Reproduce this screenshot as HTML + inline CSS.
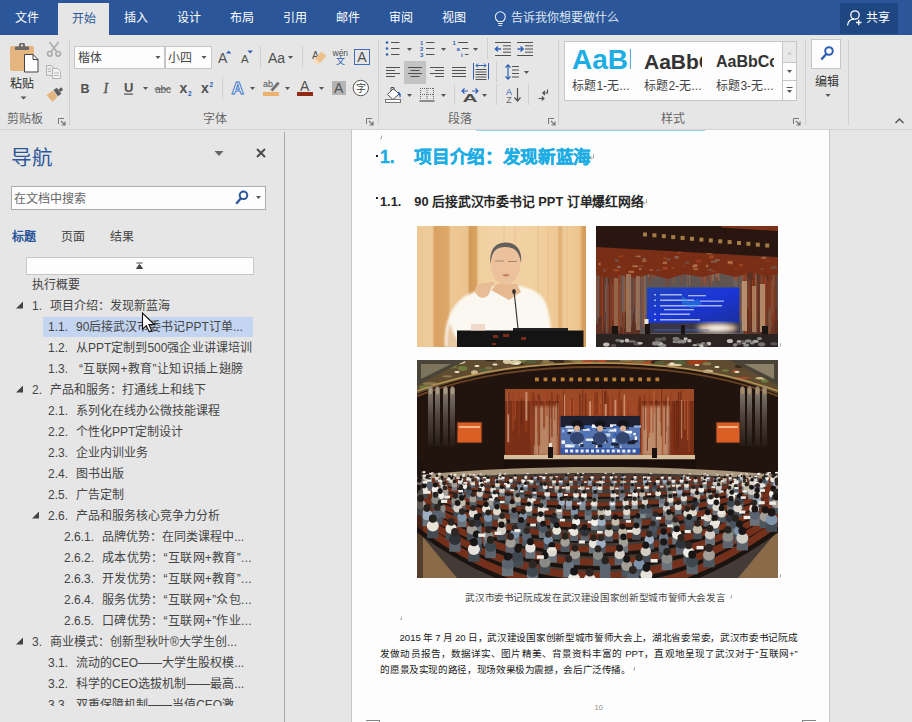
<!DOCTYPE html>
<html lang="zh-CN">
<head>
<meta charset="utf-8">
<title>Word</title>
<style>
html,body{margin:0;padding:0;}
body{width:912px;height:722px;overflow:hidden;position:relative;background:#e6e6e6;font-family:"Liberation Sans",sans-serif;font-size:12px;color:#444;}
div,span,svg{position:absolute;white-space:nowrap;box-sizing:border-box;}
#tabbar{left:0;top:0;width:912px;height:35px;background:#2b579a;}
#tabbar .t{top:0;height:35px;line-height:37px;color:#fff;font-size:12px;width:53px;text-align:justify;text-align-last:justify;}
#tabbar .act{left:58px;top:3px;width:51px;height:32px;line-height:31px;background:#e6e6e6;color:#2b579a;}
#share{left:840px;top:3px;width:58px;height:31px;background:#1e4680;}
#ribbon{left:0;top:35px;width:912px;height:95px;background:#e6e6e6;border-bottom:1px solid #d2d2d2;}
.glabel{color:#666;font-size:12px;height:14px;line-height:14px;width:24px;text-align:justify;text-align-last:justify;}
#nav{left:0;top:0;width:285px;height:722px;}
#navline{left:284px;top:132px;width:1px;height:590px;background:#ababab;}
#page{left:351px;top:130px;width:479px;height:592px;background:#fdfdfd;border-left:1px solid #c6c6c6;border-right:1px solid #c6c6c6;}
.h1{height:25px;line-height:25px;font-size:17.600px;font-weight:bold;color:#1cade4;-webkit-text-stroke:0.350px #1cade4;}
.jst{text-align:justify;text-align-last:justify;letter-spacing:-0.400px;}
.h2.jst{letter-spacing:-0.200px;}
.jst i{font-style:normal;letter-spacing:0;position:static;}
.h2{height:20px;line-height:20px;font-size:12.800px;font-weight:bold;color:#262626;}
.cap{height:16px;line-height:16px;font-size:9.600px;color:#4a4a4a;}
.bd{height:16px;line-height:16px;font-size:9.600px;color:#1a1a1a;}
</style>
</head>
<body>
<div id="tabbar">
  <div class="t" style="left:14.5px;width:24px">文件</div>
  <div class="t act"></div><div class="t" style="left:71.500px;top:1px;width:24px;color:#2b579a">开始</div>
  <div class="t" style="left:123.5px;width:24px">插入</div>
  <div class="t" style="left:176.5px;width:24px">设计</div>
  <div class="t" style="left:229.5px;width:24px">布局</div>
  <div class="t" style="left:282.5px;width:24px">引用</div>
  <div class="t" style="left:335.5px;width:24px">邮件</div>
  <div class="t" style="left:388.5px;width:24px">审阅</div>
  <div class="t" style="left:441.5px;width:24px">视图</div>
  <div class="t" style="left:511px;width:108px;color:#dfe6f2">告诉我你想要做什么</div>
  <div id="share"></div>
</div>
<div id="ribbon"></div>
<!-- ribbon text -->
<div style="left:10px;top:76.500px;width:24px;height:14px;line-height:14px;color:#2b2b2b;font-size:12px;text-align:justify;text-align-last:justify">粘贴</div>
<div class="glabel" style="left:7px;top:112px;width:36px">剪贴板</div>
<div class="glabel" style="left:203px;top:112px">字体</div>
<div class="glabel" style="left:448px;top:112px">段落</div>
<div class="glabel" style="left:661px;top:112px">样式</div>
<div style="left:74px;top:46px;width:91px;height:23px;background:#fdfdfd;border:1px solid #c6c6c6"></div>
<div style="left:165px;top:46px;width:47px;height:23px;background:#fdfdfd;border:1px solid #c6c6c6"></div>
<div style="left:78px;top:51px;height:15px;line-height:15px;color:#444;font-size:12px;width:24px;text-align:justify;text-align-last:justify">楷体</div>
<div style="left:168px;top:51px;height:15px;line-height:15px;color:#444;font-size:12px;width:24px;text-align:justify;text-align-last:justify">小四</div>
<div style="left:564px;top:41px;width:233px;height:60px;background:#fdfdfd;border:1px solid #c6c6c6"></div>
<div style="left:782px;top:42px;width:14px;height:58px;background:#e9e9e9;border-left:1px solid #c6c6c6"></div>
<div style="left:783px;top:62px;width:13px;height:19px;background:#fdfdfd;border-top:1px solid #c6c6c6;border-bottom:1px solid #c6c6c6"></div>
<div style="left:783px;top:81px;width:13px;height:19px;background:#fdfdfd"></div>
<div style="left:572px;top:44.500px;height:30px;line-height:30px;font-size:28px;font-weight:bold;color:#1cade4;width:58.500px;overflow:hidden">AaBl</div>
<div style="left:644px;top:48.500px;height:26px;line-height:26px;font-size:21px;font-weight:bold;color:#333;width:58px;overflow:hidden">AaBbC</div>
<div style="left:716px;top:50px;height:24px;line-height:24px;font-size:16px;font-weight:bold;color:#333;width:58px;overflow:hidden">AaBbCc</div>
<div style="left:572px;top:79px;height:15px;line-height:15px;font-size:12px;color:#444;width:57.500px;text-align:justify;text-align-last:justify">标题1-无...</div>
<div style="left:644px;top:79px;height:15px;line-height:15px;font-size:12px;color:#444;width:57.500px;text-align:justify;text-align-last:justify">标题2-无...</div>
<div style="left:716px;top:79px;height:15px;line-height:15px;font-size:12px;color:#444;width:57.500px;text-align:justify;text-align-last:justify">标题3-无...</div>
<div style="left:811px;top:39px;width:30px;height:30px;background:#fdfdfd;border:1px solid #c6c6c6"></div>
<div style="left:815px;top:74.500px;height:15px;line-height:15px;font-size:12px;color:#333;width:24px;text-align:justify;text-align-last:justify">编辑</div>
<svg id="ricons" style="left:0;top:0" width="912" height="130" viewBox="0 0 912 130">
<g id="clipboard">
  <rect x="10" y="46" width="24" height="25" rx="2" fill="#e4b57e"/>
  <path d="M15 50v-2.5a1 1 0 0 1 1-1h3v-2a1.5 1.5 0 0 1 1.5-1.5h3a1.5 1.5 0 0 1 1.5 1.5v2h3a1 1 0 0 1 1 1V50z M21 44.5v2h2v-2z" fill="#6a6a6a" fill-rule="evenodd"/>
  <path d="M24.5 54.5h8.5l5 5v12.5h-13.5z" fill="#fdfdfd" stroke="#444" stroke-width="1"/>
  <path d="M33 54.5v5h5" fill="none" stroke="#444" stroke-width="1"/>
  <path d="M20.5 96.5h6l-3 3z" fill="#555"/>
  <!-- scissors (disabled) -->
  <g stroke="#adadad" fill="none" stroke-width="1.700">
    <path d="M49.500 42l7.500 10M58.500 42l-7.500 10"/>
    <circle cx="49.800" cy="53.800" r="2.300"/><circle cx="58.200" cy="53.800" r="2.300"/>
  </g>
  <!-- copy (disabled) -->
  <g stroke="#b3b3b3" fill="#e9e9e9" stroke-width="1">
    <path d="M46.5 65.5h5l2.5 2.5v7.5h-7.5z"/>
    <path d="M52.5 68.5h5l3 3v7h-8z" fill="#f2f2f2"/>
    <path d="M48 69h3M48 71.5h3M54 73h5M54 75.5h5" fill="none"/>
  </g>
  <!-- format painter -->
  <path d="M46.5 95l6.5-4.500 4.500 6-5 5.500z" fill="#e4b57e"/>
  <path d="M53.5 90l3.300-2.300 4.500 6-3.300 2.500z" fill="#5c5c5c"/>
  <path d="M58.5 89.500l2.800-2.200 1.800 2.400-2.800 2.200z" fill="#5c5c5c"/>
  <!-- launcher -->
  <path d="M58.5 124v-5.500h5.5" fill="none" stroke="#777" stroke-width="1"/>
  <path d="M61 121l3.500 3.500M65 121.500v3.500h-3.500" fill="none" stroke="#777" stroke-width="1.200"/>
</g>
<g id="seps" fill="#d0d0d0">
  <rect x="69" y="40" width="1" height="85"/>
  <rect x="378" y="40" width="1" height="85"/>
  <rect x="558" y="40" width="1" height="85"/>
  <rect x="805" y="40" width="1" height="85"/>
  <rect x="848" y="40" width="1" height="85"/>
  <rect x="260" y="46" width="1" height="22"/>
  <rect x="302" y="46" width="1" height="22"/>
  <rect x="222" y="77" width="1" height="22"/>
  <rect x="487" y="38" width="1" height="21"/>
  <rect x="496" y="61" width="1" height="21"/>
  <rect x="454" y="84" width="1" height="21"/>
  <rect x="496" y="84" width="1" height="21"/>
  <rect x="528" y="84" width="1" height="21"/>
</g>
<g id="fontgrp" font-family="Liberation Sans, sans-serif">
  <path d="M155.500 56h5l-2.500 3z M201.500 56h5l-2.500 3z" fill="#555"/>
  <text x="80.500" y="92.500" font-size="12.500" font-weight="bold" fill="#505050">B</text>
  <text x="103.500" y="93" font-size="14" font-style="italic" font-family="Liberation Serif, serif" fill="#505050" stroke="#505050" stroke-width="0.300">I</text>
  <text x="124" y="92" font-size="13" fill="#505050" font-weight="bold">U</text>
  <rect x="124" y="93.500" width="9" height="1.200" fill="#505050"/>
  <path d="M143 87h5l-2.500 3z" fill="#555"/>
  <text x="155" y="92.500" font-size="10" fill="#5a5a5a">abc</text>
  <rect x="154.500" y="88.500" width="16.500" height="1" fill="#5a5a5a"/>
  <text x="179.500" y="93" font-size="14" font-weight="bold" fill="#505050">x</text>
  <text x="188" y="96" font-size="6.500" font-weight="bold" fill="#2e5fb5">2</text>
  <text x="201" y="93" font-size="14" font-weight="bold" fill="#505050">x</text>
  <text x="209.500" y="87" font-size="6.500" font-weight="bold" fill="#2e5fb5">2</text>
  <!-- grow / shrink -->
  <text x="218" y="63" font-size="14" fill="#505050">A</text>
  <path d="M226 53.500l2.700-3 2.700 3z" fill="#2e5fb5"/>
  <text x="241" y="63" font-size="11.500" fill="#505050">A</text>
  <path d="M247.500 50.500h5.400l-2.700 3z" fill="#2e5fb5"/>
  <text x="268" y="63" font-size="14" fill="#505050">Aa</text>
  <path d="M288 56h5l-2.500 3z" fill="#555"/>
  <!-- clear formatting -->
  <text x="312" y="59" font-size="10.500" fill="#505050">A</text>
  <path d="M313 60.500l8.500-9 5 4.500-8.500 9z" fill="#ecc08c"/>
  <path d="M313 60.500l2-2.100 5 4.500-2 2.100z" fill="#f6dfc2"/>
  <!-- phonetic -->
  <text x="332.500" y="55.800" font-size="8.500" fill="#505050">wén</text>
  <!-- char border -->
  <rect x="354.500" y="49.500" width="15" height="15" fill="none" stroke="#3f6dbb" stroke-width="1"/>
  <text x="357.300" y="62" font-size="14" fill="#505050">A</text>
  <!-- text effects -->
  <text x="231.500" y="93.500" font-size="17" font-weight="bold" fill="#fdfdfd" stroke="#3f78c9" stroke-width="1">A</text>
  <path d="M250 87h5l-2.500 3z" fill="#555"/>
  <!-- highlight -->
  <text x="263" y="87" font-size="9" fill="#505050">ab</text>
  <path d="M270.500 89.800l7-8 2.200 1.800-7 8z" fill="#707070"/>
  <rect x="263" y="92" width="16" height="4" fill="#ebb26e"/>
  <path d="M285 87h5l-2.500 3z" fill="#555"/>
  <!-- font color -->
  <text x="300" y="91" font-size="14" fill="#505050">A</text>
  <rect x="297" y="92" width="16" height="4" fill="#8e2a12"/>
  <path d="M319 87h5l-2.500 3z" fill="#555"/>
  <!-- char shading -->
  <rect x="332" y="81" width="14" height="14" fill="#b4b4b4"/>
  <text x="334" y="93" font-size="14" fill="#505050">A</text>
  <!-- enclosed char -->
  <circle cx="360.800" cy="88" r="7.700" fill="#fdfdfd" stroke="#555" stroke-width="1"/>
  <path d="M366.500 124v-5.500h5.500" fill="none" stroke="#777" stroke-width="1"/>
  <path d="M369 121l3.500 3.500M373 121.500v3.500h-3.500" fill="none" stroke="#777" stroke-width="1.200"/>
</g>
<g id="paragrp" font-family="Liberation Sans, sans-serif">
  <!-- bullets -->
  <g fill="#2e5fb5"><circle cx="387" cy="42.500" r="1.300"/><circle cx="387" cy="48.500" r="1.300"/><circle cx="387" cy="54.500" r="1.300"/></g>
  <path d="M391 42.500h8.500M391 48.500h8.500M391 54.500h8.500" stroke="#505050" stroke-width="1.200" fill="none"/>
  <path d="M407 48h5l-2.500 3z" fill="#555"/>
  <!-- numbering -->
  <g font-size="6" font-weight="bold" fill="#2e5fb5"><text x="420" y="45">1</text><text x="420" y="51">2</text><text x="420" y="57">3</text></g>
  <path d="M426 42.500h8.500M426 48.500h8.500M426 54.500h8.500" stroke="#505050" stroke-width="1.200" fill="none"/>
  <path d="M441 48h5l-2.500 3z" fill="#555"/>
  <!-- multilevel -->
  <g font-size="6" font-weight="bold" fill="#2e5fb5"><text x="452.500" y="45">1</text><text x="456.500" y="51">a</text><text x="461" y="57">i</text></g>
  <path d="M458 42.500h10M462 48.500h6.500M465 54.500h3.500" stroke="#505050" stroke-width="1.200" fill="none"/>
  <path d="M473 48h5l-2.500 3z" fill="#555"/>
  <!-- decrease indent -->
  <path d="M495 42.500h16M503 45.800h8M503 49h8M503 52.200h8M495 55.500h16" stroke="#505050" stroke-width="1" fill="none"/>
  <path d="M501 49h-5.500M498 46.500l-2.700 2.500 2.700 2.500" stroke="#2e5fb5" stroke-width="1.300" fill="none"/>
  <!-- increase indent -->
  <path d="M517 42.500h16M525 45.800h8M525 49h8M525 52.200h8M517 55.500h16" stroke="#505050" stroke-width="1" fill="none"/>
  <path d="M517.500 49h5.500M520.500 46.500l2.700 2.500-2.700 2.500" stroke="#2e5fb5" stroke-width="1.300" fill="none"/>
  <!-- align left -->
  <path d="M386 67.500h14M386 70.500h9M386 73.500h14M386 76.500h9" stroke="#505050" stroke-width="1" fill="none"/>
  <!-- center (active) -->
  <rect x="404" y="61" width="22" height="23" fill="#c3c3c3"/>
  <path d="M408 67.500h14M410.500 70.500h9M408 73.500h14M410.500 76.500h9" stroke="#505050" stroke-width="1" fill="none"/>
  <!-- right -->
  <path d="M430 67.500h14M435 70.500h9M430 73.500h14M435 76.500h9" stroke="#505050" stroke-width="1" fill="none"/>
  <!-- justify -->
  <path d="M452 67.500h14M452 70.500h14M452 73.500h14M452 76.500h14" stroke="#505050" stroke-width="1" fill="none"/>
  <!-- distribute -->
  <path d="M473.500 63v16.500M488.500 63v16.500" stroke="#2e5fb5" stroke-width="1" fill="none"/>
  <path d="M476 65.500h10M478 63.500l-2 2 2 2M484 63.500l2 2-2 2" stroke="#2e5fb5" stroke-width="1" fill="none"/>
  <path d="M475.500 69.500h11M475.500 72h11M475.500 74.500h11M475.500 77h11M475.500 79.500h11" stroke="#505050" stroke-width="1" fill="none"/>
  <!-- line spacing -->
  <path d="M508 65v14M505.500 67.500l2.500-2.700 2.500 2.700M505.500 76.500l2.500 2.700 2.500-2.700" stroke="#2e5fb5" stroke-width="1.200" fill="none"/>
  <path d="M512 66.500h7M512 70h7M512 73.500h7M512 77h7" stroke="#505050" stroke-width="1" fill="none"/>
  <path d="M524 71h5l-2.500 3z" fill="#555"/>
  <!-- shading bucket -->
  <path d="M387.500 94.500l6-6 5.500 5.500-6 5.500z" fill="#fdfdfd" stroke="#505050" stroke-width="1"/>
  <path d="M391 91v-3.500h3v3" fill="none" stroke="#505050" stroke-width="1"/>
  <path d="M398.500 91.500c2.500 1.500 3 4.500 1.500 6.500c-0.500-2-1-3-2-4.500z" fill="#2e5fb5"/>
  <rect x="385.500" y="99.500" width="15" height="3" fill="#fdfdfd" stroke="#777" stroke-width="1"/>
  <path d="M407 94h5l-2.500 3z" fill="#555"/>
  <!-- borders -->
  <path d="M420 88.500h14M420 94.500h14M420.500 88v12M427 88v12M433.500 88v12" stroke="#666" stroke-width="1" stroke-dasharray="1 1" fill="none"/>
  <path d="M419.500 101h15" stroke="#505050" stroke-width="1.200" fill="none"/>
  <path d="M441 94h5l-2.500 3z" fill="#555"/>
  <!-- char scaling -->
  <path d="M462 91h6M472 91h6M464.500 88.500l-2.500 2.500 2.500 2.500M475.500 88.500l2.500 2.500-2.500 2.500" stroke="#2e5fb5" stroke-width="1.200" fill="none"/>
  <text x="0" y="0" font-size="11" font-weight="bold" fill="#505050" transform="translate(462.500 101.500) scale(1.900 1)">A</text>
  <path d="M482 94h5l-2.500 3z" fill="#555"/>
  <!-- sort -->
  <text x="506" y="94.500" font-size="9" fill="#2e5fb5">A</text>
  <text x="506.300" y="102.500" font-size="9" fill="#666">Z</text>
  <path d="M517.500 88v13M514.500 97.500l3 3.500 3-3.500" stroke="#505050" stroke-width="1.200" fill="none"/>
  <!-- show marks -->
  <path d="M547.500 89.500v3.500h-4.500M545 91l-2.200 2 2.200 2" stroke="#505050" stroke-width="1.100" fill="none"/>
  <path d="M538.500 98.500h5.500M541.800 96.500l2.200 2-2.200 2" stroke="#505050" stroke-width="1.100" fill="none"/>
  <path d="M548.500 124v-5.500h5.500" fill="none" stroke="#777" stroke-width="1"/>
  <path d="M551 121l3.500 3.500M555 121.500v3.500h-3.500" fill="none" stroke="#777" stroke-width="1.200"/>
</g>
<g id="stylegrp">
  <path d="M787 54.500l2.500-3 2.500 3z" fill="#c8c8c8"/>
  <path d="M787 70h5l-2.500 3z" fill="#555"/>
  <path d="M786.500 87.500h6" stroke="#555" stroke-width="1" fill="none"/>
  <path d="M787 90h5l-2.500 3z" fill="#555"/>
  <path d="M793.500 124v-5.500h5.500" fill="none" stroke="#777" stroke-width="1"/>
  <path d="M796 121l3.500 3.500M800 121.500v3.500h-3.500" fill="none" stroke="#777" stroke-width="1.200"/>
</g>
<g id="editgrp">
  <circle cx="829" cy="51" r="3.800" fill="none" stroke="#2e5fb5" stroke-width="2"/>
  <path d="M826.300 54l-5 5.500" stroke="#2e5fb5" stroke-width="2.400" fill="none"/>
  <path d="M825.500 94h5l-2.500 3z" fill="#555"/>
  <path d="M895.500 123l4-4 4 4" stroke="#555" stroke-width="1.500" fill="none"/>
</g>
<g id="tabicons">
  <!-- lightbulb -->
  <path d="M498 21.500c-2-1.500-2.700-3-2.700-4.700a5 5 0 0 1 10 0c0 1.700-0.700 3.200-2.700 4.700z" fill="none" stroke="#e8eef8" stroke-width="1.100"/>
  <path d="M498 23.500h4.600M498.500 25.500h3.600" stroke="#e8eef8" stroke-width="1" fill="none"/>
  <!-- share person -->
  <circle cx="855" cy="15" r="4.200" fill="none" stroke="#fff" stroke-width="1.300"/>
  <path d="M847.500 25.500c0.500-4 3-6.300 6.500-6.300" fill="none" stroke="#fff" stroke-width="1.300"/>
  <path d="M856 22.500h5.500M858.700 19.700v5.600" stroke="#fff" stroke-width="1.300" fill="none"/>
</g>
</svg>
<div style="left:336px;top:56px;font-size:9px;height:10px;line-height:10px;color:#2e5fb5">文</div>
<div style="left:355.800px;top:82.800px;font-size:10px;height:12px;line-height:12px;color:#444">字</div>
<div style="left:866px;top:3px;height:31px;line-height:31px;color:#fff;font-size:12px;width:24px;text-align:justify;text-align-last:justify">共享</div>
<div id="nav">
<div style="left:11px;top:144px;height:28px;line-height:28px;font-size:20.500px;color:#2b579a;width:41px;text-align:justify;text-align-last:justify">导航</div>
<div style="left:11px;top:186px;width:255px;height:24px;background:#fdfdfd;border:1px solid #ababab"></div>
<div style="left:14px;top:191px;height:16px;line-height:16px;font-size:12px;color:#666;width:72px;text-align:justify;text-align-last:justify">在文档中搜索</div>
<div style="left:12px;top:228.500px;height:16px;line-height:16px;font-size:12px;color:#2b579a;font-weight:bold;width:24px;text-align:justify;text-align-last:justify">标题</div>
<div style="left:61px;top:228.500px;height:16px;line-height:16px;font-size:12px;color:#444;width:24px;text-align:justify;text-align-last:justify">页面</div>
<div style="left:110px;top:228.500px;height:16px;line-height:16px;font-size:12px;color:#444;width:24px;text-align:justify;text-align-last:justify">结果</div>
<div style="left:26px;top:257px;width:228px;height:18px;background:#fdfdfd;border:1px solid #c6c6c6"></div>
<div style="left:43px;top:317px;width:210px;height:20px;background:#c3d5f1"></div>
<div id="navlist" style="left:0;top:275px;width:284px;height:431px;overflow:hidden;font-size:12px;color:#444">
<div style="left:32px;top:0px;width:48.2px;height:21px;line-height:21px;text-align:justify;text-align-last:justify">执行概要</div>
<div style="left:32px;top:21px;height:21px;line-height:21px">1.</div>
<div style="left:50px;top:21px;width:120.2px;height:21px;line-height:21px;text-align:justify;text-align-last:justify">项目介绍：发现新蓝海</div>
<div style="left:48px;top:42px;height:21px;line-height:21px">1.1.</div>
<div style="left:76px;top:42px;width:166.9px;height:21px;line-height:21px;text-align:justify;text-align-last:justify">90后接武汉市委书记PPT订单...</div>
<div style="left:48px;top:63px;height:21px;line-height:21px">1.2.</div>
<div style="left:76px;top:63px;width:175.6px;height:21px;line-height:21px;text-align:justify;text-align-last:justify">从PPT定制到500强企业讲课培训</div>
<div style="left:48px;top:84px;height:21px;line-height:21px">1.3.</div>
<div style="left:79px;top:84px;width:164.4px;height:21px;line-height:21px;text-align:justify;text-align-last:justify;letter-spacing:0.350px">“互联网+教育”让知识插上翅膀</div>
<div style="left:32px;top:105px;height:21px;line-height:21px">2.</div>
<div style="left:50px;top:105px;width:156.2px;height:21px;line-height:21px;text-align:justify;text-align-last:justify">产品和服务：打通线上和线下</div>
<div style="left:48px;top:126px;height:21px;line-height:21px">2.1.</div>
<div style="left:76px;top:126px;width:144.2px;height:21px;line-height:21px;text-align:justify;text-align-last:justify">系列化在线办公微技能课程</div>
<div style="left:48px;top:147px;height:21px;line-height:21px">2.2.</div>
<div style="left:76px;top:147px;width:107.5px;height:21px;line-height:21px;text-align:justify;text-align-last:justify">个性化PPT定制设计</div>
<div style="left:48px;top:168px;height:21px;line-height:21px">2.3.</div>
<div style="left:76px;top:168px;width:72.2px;height:21px;line-height:21px;text-align:justify;text-align-last:justify">企业内训业务</div>
<div style="left:48px;top:189px;height:21px;line-height:21px">2.4.</div>
<div style="left:76px;top:189px;width:48.2px;height:21px;line-height:21px;text-align:justify;text-align-last:justify">图书出版</div>
<div style="left:48px;top:210px;height:21px;line-height:21px">2.5.</div>
<div style="left:76px;top:210px;width:48.2px;height:21px;line-height:21px;text-align:justify;text-align-last:justify">广告定制</div>
<div style="left:48px;top:231px;height:21px;line-height:21px">2.6.</div>
<div style="left:76px;top:231px;width:144.2px;height:21px;line-height:21px;text-align:justify;text-align-last:justify">产品和服务核心竞争力分析</div>
<div style="left:64px;top:252px;height:21px;line-height:21px">2.6.1.</div>
<div style="left:102px;top:252px;width:142.2px;height:21px;line-height:21px;text-align:justify;text-align-last:justify">品牌优势：在同类课程中...</div>
<div style="left:64px;top:273px;height:21px;line-height:21px">2.6.2.</div>
<div style="left:102px;top:273px;width:150.0px;height:21px;line-height:21px;text-align:justify;text-align-last:justify;letter-spacing:0.300px">成本优势：“互联网+教育”...</div>
<div style="left:64px;top:294px;height:21px;line-height:21px">2.6.3.</div>
<div style="left:102px;top:294px;width:150.0px;height:21px;line-height:21px;text-align:justify;text-align-last:justify;letter-spacing:0.300px">开发优势：“互联网+教育”...</div>
<div style="left:64px;top:315px;height:21px;line-height:21px">2.6.4.</div>
<div style="left:102px;top:315px;width:150.0px;height:21px;line-height:21px;text-align:justify;text-align-last:justify;letter-spacing:0.300px">服务优势：“互联网+”众包...</div>
<div style="left:64px;top:336px;height:21px;line-height:21px">2.6.5.</div>
<div style="left:102px;top:336px;width:150.0px;height:21px;line-height:21px;text-align:justify;text-align-last:justify;letter-spacing:0.300px">口碑优势：“互联网+”作业...</div>
<div style="left:32px;top:357px;height:21px;line-height:21px">3.</div>
<div style="left:50px;top:357px;width:187.0px;height:21px;line-height:21px;text-align:justify;text-align-last:justify">商业模式：创新型秋叶®大学生创...</div>
<div style="left:48px;top:378px;height:21px;line-height:21px">3.1.</div>
<div style="left:76px;top:378px;width:168.2px;height:21px;line-height:21px;text-align:justify;text-align-last:justify">流动的CEO——大学生股权模...</div>
<div style="left:48px;top:399px;height:21px;line-height:21px">3.2.</div>
<div style="left:76px;top:399px;width:168.2px;height:21px;line-height:21px;text-align:justify;text-align-last:justify">科学的CEO选拔机制——最高...</div>
<div style="left:48px;top:420px;height:21px;line-height:21px">3.3.</div>
<div style="left:76px;top:420px;width:158.2px;height:21px;line-height:21px;text-align:justify;text-align-last:justify">双重保障机制——当值CEO激</div>
</div>
<svg style="left:0;top:130px" width="290" height="592" viewBox="0 130 290 592">
<path d="M23 308.5v-7l-7 7z" fill="#444"/>
<path d="M23 392.5v-7l-7 7z" fill="#444"/>
<path d="M39 518.5v-7l-7 7z" fill="#444"/>
<path d="M23 644.5v-7l-7 7z" fill="#444"/>
<path d="M214.500 151h9l-4.500 5z" fill="#666"/>
<path d="M257 149l8 8M265 149l-8 8" stroke="#4a4a4a" stroke-width="1.900" fill="none"/>
<circle cx="243.500" cy="195.300" r="3.800" fill="none" stroke="#2b579a" stroke-width="2"/>
<path d="M241 198.300l-4.800 5.400" stroke="#2b579a" stroke-width="2.300" fill="none"/>
<path d="M256 196h5l-2.500 3z" fill="#555"/>
<path d="M136.500 263h6M136.500 268.500l3-4 3 4z" stroke="#444" stroke-width="1" fill="#444"/>
<path d="M142.500 313v16.200l3.800-3.600 2.800 6.200 2.600-1.100-2.800-6.200h5.400z" fill="#fff" stroke="#111" stroke-width="1.100" stroke-linejoin="miter"/>
</svg>
</div>
<div id="navline"></div>
<div id="page"></div>
<div id="doc" style="left:0;top:0;width:912px;height:722px;">
<div style="left:476px;top:130px;width:229px;height:1px;background:#96d6f2"></div>
<div style="left:375.500px;top:155px;width:2px;height:2px;background:#222"></div>
<div style="left:375.500px;top:197px;width:2px;height:2px;background:#222"></div>
<div class="h1" style="left:380px;top:145px">1.</div>
<div class="h1 jst" style="left:414.300px;top:145px;width:176.800px" id="h1t">项目介绍：发现新蓝海</div>
<div class="h2" style="left:380px;top:192px">1.1.</div>
<div class="h2 jst" style="left:414.300px;top:192px;width:229.500px" id="h2t"><i>90</i> 后接武汉市委书记 <i>PPT</i> 订单爆红网络</div>
<div class="cap jst" style="left:465.300px;top:590px;width:260px" id="capt">武汉市委书记阮成发在武汉建设国家创新型城市誓师大会发言</div>
<div class="bd jst" style="left:399.500px;top:629.500px;width:397.800px" id="b1"><i>2015</i> 年 <i>7</i> 月 <i>20</i> 日，武汉建设国家创新型城市誓师大会上，湖北省委常委，武汉市委书记阮成</div>
<div class="bd jst" style="left:380.300px;top:645.500px;width:417px" id="b2">发做动员报告，数据详实、图片精美、背景资料丰富的 <i>PPT</i>，直观地呈现了武汉对于“互联网<i>+</i>”</div>
<div class="bd jst" style="left:380.300px;top:661.500px;width:250.400px" id="b3">的愿景及实现的路径，现场效果极为震撼，会后广泛传播。</div>
<div style="left:594.500px;top:703px;height:10px;line-height:10px;font-size:7.500px;color:#8a8a8a">10</div>
<svg id="img1" style="left:417px;top:226px" width="169" height="121" viewBox="0 0 169 121">
<defs>
<linearGradient id="cur1" x1="0" x2="1" y1="0" y2="0">
<stop offset="0" stop-color="#ecc896"/><stop offset="0.090" stop-color="#eecb9a"/><stop offset="0.105" stop-color="#d9a162"/><stop offset="0.185" stop-color="#dca868"/><stop offset="0.200" stop-color="#edc794"/><stop offset="0.300" stop-color="#ebc28c"/><stop offset="0.312" stop-color="#d39a58"/><stop offset="0.350" stop-color="#d8a262"/><stop offset="0.365" stop-color="#f0cf9f"/><stop offset="0.500" stop-color="#f2d3a6"/><stop offset="0.700" stop-color="#f1d0a0"/><stop offset="0.830" stop-color="#eec894"/><stop offset="0.845" stop-color="#deaa6c"/><stop offset="0.870" stop-color="#efcc9a"/><stop offset="0.960" stop-color="#edc48e"/><stop offset="0.985" stop-color="#d69c5a"/><stop offset="1" stop-color="#d69c5a"/>
</linearGradient>
<filter id="bl1" x="-10%" y="-10%" width="120%" height="120%"><feGaussianBlur stdDeviation="1.200"/></filter>
<filter id="bl1b" x="-10%" y="-10%" width="120%" height="120%"><feGaussianBlur stdDeviation="0.600"/></filter>
</defs>
<rect width="169" height="121" fill="url(#cur1)"/>
<g stroke="#e2b783" stroke-width="1" opacity="0.600"><path d="M87 0v70M98 0v30M121 0v121M131 0v121M150 0v121"/></g>
<g filter="url(#bl1)">
<path d="M28 121c-1-20 4-42 22-52c8-4 18-7 30-9l22 0c12 2 20 6 25 14c5 8 6 20 7 30v17z" fill="#fbf8f1"/>
<path d="M30 121c0-8 0-16 3-24c2 8 6 16 12 24z" fill="#e9c9a4"/>
</g>
<g filter="url(#bl1b)">
<path d="M74 64l6-6h20l4 8l-12 8z" fill="#e6b990"/>
<ellipse cx="88.500" cy="38" rx="14.800" ry="21" fill="#ecc29c"/>
<path d="M73.400 38C72 23 79 16.500 88.500 16.500C98.500 16.500 105.500 23 104 37C102.500 29 100.500 24.500 96 22.500C90 20 82 20.500 78 24.500C75 28 74.500 31.500 73.400 38z" fill="#625e5b"/>
<path d="M78 35h9M91 35.500h9" stroke="#a8866a" stroke-width="1.200" fill="none"/>
<path d="M85 49c2-1.500 6-1.500 8 0c-2 2-6 2-8 0z" fill="#c9836a"/>
<path d="M58 66c-1-5 4-9 9-9l8-1c3 0 3 3 0 4l-3 8c-3 5-10 6-14-2z" fill="#e8bd95"/>
</g>
<path d="M97 64.500l4 38" stroke="#3a3a3a" stroke-width="1.200" fill="none"/>
<ellipse cx="97" cy="65.500" rx="1.800" ry="2.500" fill="#333"/>
<rect x="96" y="102" width="55" height="3" fill="#222"/>
<rect x="40" y="104.500" width="126.500" height="16.500" fill="#141414"/>
<rect x="54" y="98" width="14" height="6.500" fill="#f0d5c6" opacity="0.900"/>
<g fill="#7a2a1a"><rect x="76" y="109" width="5" height="3"/><rect x="86" y="108" width="6" height="3"/><rect x="104" y="111" width="5" height="3"/><rect x="75" y="117" width="4" height="2"/></g>
</svg>
<svg id="img2" style="left:596px;top:226px" width="182" height="121" viewBox="0 0 182 121">
<defs><filter id="bl2" x="-20%" y="-20%" width="140%" height="140%"><feGaussianBlur stdDeviation="2.500"/></filter><filter id="bl2b" x="-10%" y="-10%" width="120%" height="120%"><feGaussianBlur stdDeviation="0.700"/></filter>
<linearGradient id="scr2" x1="0" x2="1" y1="0" y2="1"><stop offset="0" stop-color="#2044b8"/><stop offset="0.500" stop-color="#1a36d6"/><stop offset="1" stop-color="#1b2f9e"/></linearGradient></defs>
<rect width="182" height="121" fill="#5c3022"/>
<rect x="44" y="44" width="104" height="66" fill="#5e5552"/>
<g opacity="0.700"><rect x="171.7" y="55.1" width="1" height="53.2" fill="#9c5c3a"/><rect x="121.4" y="37.6" width="2" height="16.9" fill="#a8704c"/><rect x="165" y="36.3" width="1" height="50.2" fill="#6a5a55"/><rect x="120.4" y="37.4" width="1" height="20" fill="#96381a"/><rect x="43.6" y="41" width="1" height="45.4" fill="#96381a"/><rect x="48.1" y="48.9" width="1" height="51.4" fill="#a8704c"/><rect x="113.5" y="39" width="1" height="15.3" fill="#96381a"/><rect x="16.6" y="55.6" width="1.500" height="42" fill="#8c3216"/><rect x="17.8" y="43.3" width="2" height="57.5" fill="#96381a"/><rect x="149" y="42.1" width="2" height="66" fill="#a34322"/><rect x="39.4" y="44.8" width="2" height="52.6" fill="#a8421f"/><rect x="9" y="58.9" width="2" height="27" fill="#a8704c"/><rect x="17.7" y="48.6" width="1.500" height="54.7" fill="#b34a22"/><rect x="53.4" y="39.4" width="1.500" height="17.9" fill="#96381a"/><rect x="35.1" y="38.2" width="1" height="62.4" fill="#6a5a55"/><rect x="107.7" y="40.8" width="2" height="17.8" fill="#b34a22"/><rect x="37" y="44.3" width="1" height="43.3" fill="#6b5a55"/><rect x="45.8" y="36.8" width="1" height="58" fill="#a8704c"/><rect x="101.9" y="40.1" width="1" height="11.9" fill="#a34322"/><rect x="21" y="39.4" width="1" height="68.3" fill="#8c3216"/><rect x="91.7" y="40.8" width="1" height="12.7" fill="#6b5a55"/><rect x="41.1" y="48.8" width="1.500" height="36.6" fill="#7a6e6a"/><rect x="24.6" y="48.4" width="1.500" height="48.1" fill="#9c5c3a"/><rect x="39.8" y="44.5" width="1.500" height="53.1" fill="#a8421f"/><rect x="35.2" y="42.7" width="1.500" height="51.8" fill="#6a5a55"/><rect x="165.2" y="36.3" width="1.500" height="60.1" fill="#6a5a55"/><rect x="160.5" y="55.6" width="1.500" height="43.8" fill="#a34322"/><rect x="17.3" y="58.5" width="2" height="33.8" fill="#96381a"/><rect x="138" y="37.7" width="1.500" height="22.4" fill="#7a6e6a"/><rect x="170.8" y="53.5" width="2" height="31.6" fill="#8c3216"/><rect x="27.7" y="56.8" width="1" height="31.3" fill="#a8421f"/><rect x="22.1" y="51.6" width="1" height="35" fill="#96381a"/><rect x="140.1" y="37.1" width="1" height="24.5" fill="#7a6e6a"/><rect x="158.6" y="44.4" width="1" height="55.4" fill="#b34a22"/><rect x="45.2" y="36" width="2" height="56.1" fill="#6a5a55"/><rect x="113.4" y="41.5" width="1.500" height="12.1" fill="#6a5a55"/><rect x="77" y="40.1" width="1.500" height="16.7" fill="#9c5c3a"/><rect x="148.3" y="45.2" width="1" height="49.1" fill="#a8704c"/><rect x="156" y="57.4" width="1.500" height="22.6" fill="#b34a22"/><rect x="166.6" y="39.4" width="2" height="59.5" fill="#8c3216"/><rect x="181.1" y="47.8" width="2" height="46.5" fill="#6b5a55"/><rect x="134.1" y="45.8" width="1" height="10.1" fill="#6b5a55"/><rect x="49.2" y="47.8" width="1" height="40.8" fill="#7a6e6a"/><rect x="31.1" y="46.6" width="2" height="42.1" fill="#96381a"/><rect x="26.6" y="42.6" width="1" height="65.5" fill="#a8421f"/><rect x="175.8" y="53.3" width="2" height="35.3" fill="#7a6e6a"/><rect x="176.5" y="57.1" width="1" height="49.7" fill="#a8421f"/><rect x="26.7" y="44.1" width="1" height="44.8" fill="#9c5c3a"/><rect x="156.4" y="53.9" width="1" height="43.8" fill="#a8421f"/><rect x="22.8" y="58" width="1" height="48.6" fill="#9c5c3a"/><rect x="38.9" y="46.3" width="2" height="51" fill="#7a6e6a"/><rect x="169.3" y="53.3" width="1" height="53.7" fill="#7a6e6a"/><rect x="0.2" y="54.7" width="1.500" height="42.8" fill="#7a6e6a"/><rect x="23.9" y="49.2" width="1" height="45.8" fill="#a34322"/><rect x="163.7" y="37.2" width="1" height="64.8" fill="#6a5a55"/><rect x="111.1" y="45.8" width="1" height="16.2" fill="#7a6e6a"/><rect x="6.1" y="50.7" width="1" height="54" fill="#b34a22"/><rect x="114.9" y="37.9" width="1" height="21.8" fill="#b34a22"/><rect x="5.4" y="45.1" width="1" height="37.1" fill="#a8421f"/><rect x="177.1" y="39.2" width="2" height="53.7" fill="#a34322"/><rect x="179.5" y="45" width="1" height="36.7" fill="#6a5a55"/><rect x="169.1" y="43" width="1" height="65.3" fill="#9c5c3a"/><rect x="27.6" y="42.1" width="1" height="60.4" fill="#9c5c3a"/><rect x="129.4" y="37.3" width="1" height="12.9" fill="#a34322"/><rect x="143.4" y="56.7" width="1" height="38.5" fill="#7a6e6a"/><rect x="23.1" y="59.1" width="1" height="24.1" fill="#9c5c3a"/><rect x="157.4" y="56.4" width="1" height="52" fill="#6b5a55"/><rect x="145.4" y="57.9" width="1" height="36.9" fill="#a8704c"/><rect x="157" y="56.1" width="1.500" height="32.6" fill="#8c3216"/><rect x="84.8" y="39" width="1" height="18.6" fill="#a34322"/><rect x="164.9" y="53.8" width="1" height="38.1" fill="#b34a22"/><rect x="10.1" y="36.9" width="1.500" height="69.7" fill="#7a6e6a"/><rect x="23.5" y="57.4" width="1.500" height="41.2" fill="#6b5a55"/><rect x="146" y="39.7" width="2" height="45.1" fill="#a34322"/><rect x="93.2" y="44.2" width="1" height="14.8" fill="#a8704c"/><rect x="143.3" y="58.2" width="1" height="32.9" fill="#a8421f"/><rect x="160.9" y="58.7" width="1.500" height="24.8" fill="#a34322"/><rect x="151.6" y="59.8" width="1" height="21.2" fill="#a8421f"/><rect x="166.7" y="57.9" width="1" height="43.3" fill="#6a5a55"/><rect x="153.3" y="53.6" width="1" height="48" fill="#96381a"/><rect x="10.4" y="37.1" width="1" height="61.2" fill="#6a5a55"/><rect x="160.1" y="52.4" width="1.500" height="32.7" fill="#a8421f"/><rect x="115.9" y="36.9" width="1" height="18.7" fill="#a8704c"/><rect x="173.3" y="37.1" width="1.500" height="67.9" fill="#7a6e6a"/><rect x="177" y="58.8" width="2" height="27" fill="#9c5c3a"/><rect x="11.7" y="58.2" width="1" height="45.5" fill="#b34a22"/><rect x="176.3" y="41.1" width="1.500" height="39.4" fill="#9c5c3a"/><rect x="164.9" y="45" width="1.500" height="53.7" fill="#a8421f"/><rect x="177.7" y="60" width="1.500" height="36.6" fill="#96381a"/><rect x="173.2" y="42.3" width="1" height="49.8" fill="#96381a"/><rect x="160.9" y="52.7" width="1" height="51.2" fill="#8c3216"/><rect x="24.6" y="42" width="1.500" height="59.1" fill="#6a5a55"/><rect x="56.6" y="43.7" width="1" height="6.3" fill="#6a5a55"/><rect x="159.7" y="55.6" width="1" height="44.1" fill="#a8421f"/><rect x="152.7" y="55.5" width="1.500" height="36" fill="#96381a"/><rect x="8.5" y="42.3" width="1" height="58" fill="#6a5a55"/><rect x="38.2" y="49.4" width="1" height="31.5" fill="#a8421f"/><rect x="90.1" y="36.2" width="1.500" height="20.2" fill="#96381a"/><rect x="17.9" y="39.9" width="1" height="58.7" fill="#96381a"/><rect x="30.3" y="51.1" width="2" height="33.2" fill="#6b5a55"/><rect x="15.9" y="58" width="1" height="35.9" fill="#6b5a55"/><rect x="172.7" y="58.5" width="1" height="37.5" fill="#7a6e6a"/><rect x="40.7" y="46.1" width="1" height="35.5" fill="#a8421f"/><rect x="71.7" y="40.6" width="1.500" height="11.8" fill="#a8704c"/><rect x="156.3" y="54" width="1" height="33.2" fill="#a34322"/><rect x="111" y="40.9" width="1" height="13.2" fill="#96381a"/><rect x="143.5" y="40.1" width="1" height="42.9" fill="#6a5a55"/><rect x="119.5" y="41.3" width="2" height="9.8" fill="#a8704c"/><rect x="146.1" y="50.5" width="1" height="48.1" fill="#6b5a55"/><rect x="1.4" y="43.5" width="2" height="48" fill="#7a6e6a"/><rect x="173.5" y="49.9" width="1" height="58.1" fill="#9c5c3a"/><rect x="173.9" y="44.7" width="1" height="53.1" fill="#9c5c3a"/><rect x="3.9" y="38.1" width="2" height="52.6" fill="#8c3216"/><rect x="46.5" y="42.6" width="1" height="58.9" fill="#b34a22"/><rect x="111.6" y="42.9" width="1" height="17.2" fill="#8c3216"/><rect x="145.7" y="38.9" width="2" height="51.4" fill="#9c5c3a"/><rect x="0.1" y="45.4" width="1" height="40" fill="#9c5c3a"/><rect x="106.4" y="42.9" width="1" height="13.8" fill="#a34322"/><rect x="69.6" y="42.2" width="1" height="18.5" fill="#96381a"/><rect x="172.7" y="41.4" width="2" height="40.5" fill="#8c3216"/><rect x="159" y="48.7" width="2" height="58.5" fill="#6a5a55"/><rect x="30.3" y="59.2" width="1" height="26.4" fill="#a8421f"/><rect x="28.1" y="50.5" width="1.500" height="35" fill="#a8704c"/><rect x="167.9" y="52.6" width="2" height="49.3" fill="#a8421f"/><rect x="26" y="37.7" width="2" height="47.9" fill="#7a6e6a"/><rect x="71.1" y="40.8" width="1" height="10.4" fill="#a8704c"/><rect x="16.8" y="44.8" width="2" height="58" fill="#8c3216"/><rect x="174.7" y="55.3" width="1" height="46.1" fill="#9c5c3a"/><rect x="40.7" y="40.7" width="2" height="49" fill="#96381a"/><rect x="140.9" y="45.4" width="1" height="10.2" fill="#a8421f"/><rect x="138.5" y="39.8" width="2" height="14.3" fill="#b34a22"/><rect x="116.4" y="40.8" width="1.500" height="13.5" fill="#a8704c"/><rect x="14.5" y="48" width="1" height="52.9" fill="#b34a22"/><rect x="16.8" y="56.4" width="1" height="39.2" fill="#a8421f"/><rect x="151.5" y="52" width="1" height="30.2" fill="#6a5a55"/><rect x="159.3" y="40.3" width="1" height="65" fill="#a8704c"/><rect x="147.2" y="38" width="1.500" height="66.5" fill="#96381a"/><rect x="52" y="44.7" width="1" height="6.3" fill="#a8704c"/><rect x="90.7" y="38.8" width="1" height="22.7" fill="#7a6e6a"/><rect x="19.6" y="54.7" width="1" height="38.4" fill="#8c3216"/><rect x="21.1" y="53.4" width="2" height="51" fill="#6b5a55"/><rect x="40.8" y="40" width="1" height="50.2" fill="#6a5a55"/><rect x="180.9" y="59.9" width="1" height="26.6" fill="#6b5a55"/><rect x="23.5" y="42.9" width="1" height="57.1" fill="#b34a22"/><rect x="57.1" y="40.1" width="2" height="11.7" fill="#a8421f"/><rect x="105.1" y="45.2" width="1" height="16" fill="#a8421f"/><rect x="21.5" y="42.4" width="1.500" height="60.2" fill="#a34322"/><rect x="64" y="43" width="1" height="8.1" fill="#b34a22"/><rect x="157" y="44.8" width="2" height="49.5" fill="#8c3216"/><rect x="72.2" y="41.5" width="1" height="17.3" fill="#96381a"/></g>
<path d="M0 20l182 12v16l-12 2-14-4-16 5-18-4-16 4-18-3-16 5-18-5-14 4-16-3-12 3-12-3z" fill="#7a2e16"/>
<g opacity="0.700"><rect x="86.6" y="39.5" width="2.1" height="1.4" fill="#a8421f"/><rect x="41.8" y="39.8" width="5.2" height="1.1" fill="#6e5a54"/><rect x="90.1" y="24.8" width="5.5" height="2.6" fill="#7a2c14"/><rect x="100.4" y="33.7" width="4.6" height="2.8" fill="#a8421f"/><rect x="66.7" y="35.7" width="4.3" height="2.2" fill="#c28a5a"/><rect x="70.3" y="32.3" width="4.4" height="2.4" fill="#6e5a54"/><rect x="116" y="25.2" width="4.1" height="1.8" fill="#6e5a54"/><rect x="166.4" y="30.6" width="3.5" height="1.8" fill="#8a7670"/><rect x="82.1" y="25.4" width="4.3" height="1.4" fill="#a8421f"/><rect x="81.7" y="25.3" width="2.5" height="2.8" fill="#a8421f"/><rect x="67.4" y="31.5" width="3.9" height="1.3" fill="#b0502a"/><rect x="22.4" y="29.5" width="4.5" height="1.8" fill="#a8421f"/><rect x="113.2" y="29.4" width="4.4" height="2.8" fill="#b0502a"/><rect x="164.7" y="42.4" width="2.5" height="1.1" fill="#8a7670"/><rect x="133.2" y="36.3" width="3.8" height="2.4" fill="#a8421f"/><rect x="110" y="38.8" width="2.2" height="2.2" fill="#c28a5a"/><rect x="21.1" y="39.9" width="3.8" height="2.2" fill="#8a7670"/><rect x="96.6" y="39.3" width="2.3" height="2.4" fill="#c28a5a"/><rect x="16.7" y="25.5" width="3.2" height="2" fill="#7a2c14"/><rect x="97.4" y="42.5" width="4.7" height="1.5" fill="#c28a5a"/><rect x="72.9" y="30.7" width="3.2" height="1" fill="#7a2c14"/><rect x="136.5" y="35.3" width="3.9" height="1.3" fill="#7a2c14"/><rect x="39" y="29.8" width="2.8" height="1.2" fill="#8a7670"/><rect x="63.5" y="25.7" width="3.8" height="2" fill="#7a2c14"/><rect x="71" y="28.3" width="2.7" height="2" fill="#7a2c14"/><rect x="168.4" y="31.6" width="2.6" height="1.5" fill="#a8421f"/><rect x="88.9" y="35.8" width="4.2" height="2.3" fill="#6e5a54"/><rect x="75.5" y="41.3" width="3.2" height="1.2" fill="#b0502a"/><rect x="46.7" y="31.9" width="3.1" height="2.3" fill="#8a7670"/><rect x="115.3" y="45" width="4.8" height="1.2" fill="#a8421f"/><rect x="17.3" y="43.2" width="5.4" height="2.2" fill="#b0502a"/><rect x="9" y="45.4" width="2.7" height="1.7" fill="#7a2c14"/><rect x="137.9" y="26.2" width="5.5" height="1.6" fill="#b0502a"/><rect x="52.7" y="31.4" width="2.3" height="1.6" fill="#7a2c14"/><rect x="32.4" y="44.8" width="5.6" height="2" fill="#c28a5a"/><rect x="18.8" y="33.2" width="3.7" height="2.9" fill="#6e5a54"/><rect x="97.4" y="38.3" width="4" height="2.9" fill="#c28a5a"/><rect x="170.3" y="34.3" width="2.7" height="1.5" fill="#a8421f"/><rect x="110.7" y="26.1" width="5.9" height="2.1" fill="#c28a5a"/><rect x="78.7" y="30" width="3.8" height="2.6" fill="#8a7670"/><rect x="7" y="43.4" width="3.5" height="2.3" fill="#6e5a54"/><rect x="165.4" y="31.2" width="4.1" height="1.3" fill="#c28a5a"/><rect x="9.6" y="44.7" width="3.2" height="2.1" fill="#7a2c14"/><rect x="143.6" y="38" width="3.1" height="2.5" fill="#b0502a"/><rect x="46.1" y="34.4" width="4.4" height="1.3" fill="#c28a5a"/><rect x="36.5" y="39.3" width="5.1" height="1.9" fill="#c28a5a"/><rect x="42.1" y="29.5" width="2.4" height="1.9" fill="#c28a5a"/><rect x="111.5" y="42.9" width="5.2" height="2" fill="#6e5a54"/><rect x="53.6" y="43.5" width="3.4" height="1.1" fill="#c28a5a"/><rect x="129.7" y="26.7" width="3.3" height="2.2" fill="#a8421f"/><rect x="115" y="34.8" width="5.7" height="1.6" fill="#8a7670"/><rect x="60.1" y="43.3" width="4.1" height="1.6" fill="#6e5a54"/><rect x="66.7" y="41" width="4.6" height="2.5" fill="#b0502a"/><rect x="131.1" y="24" width="3.2" height="2.7" fill="#6e5a54"/><rect x="119" y="33.3" width="4.7" height="1.7" fill="#8a7670"/><rect x="131.7" y="35.1" width="4.8" height="2.6" fill="#c28a5a"/><rect x="2.6" y="36.7" width="2" height="2.6" fill="#c28a5a"/><rect x="138.9" y="42.4" width="2.9" height="1" fill="#a8421f"/><rect x="174.8" y="40.2" width="5.9" height="2.7" fill="#6e5a54"/><rect x="42.9" y="42.2" width="2.4" height="1.8" fill="#c28a5a"/></g>
<path d="M0 0h182v31l-182-10z" fill="#2a1610"/>
<path d="M125 0h57v5l-57-3.500z" fill="#7a3218"/>
<g filter="url(#bl2b)" opacity="0.800"><rect x="47" y="6.5" width="4" height="4" fill="#c39652"/><rect x="56.4" y="7.3" width="4" height="4" fill="#c39652"/><rect x="65.8" y="8.2" width="4" height="4" fill="#c39652"/><rect x="75.2" y="9.1" width="4" height="4" fill="#c39652"/><rect x="84.6" y="9.9" width="4" height="4" fill="#c39652"/><rect x="94" y="10.8" width="4" height="4" fill="#c39652"/><rect x="103.4" y="11.6" width="4" height="4" fill="#c39652"/><rect x="112.8" y="12.4" width="4" height="4" fill="#c39652"/><rect x="122.2" y="13.3" width="4" height="4" fill="#c39652"/><rect x="131.6" y="14.1" width="4" height="4" fill="#c39652"/><rect x="141" y="15" width="4" height="4" fill="#c39652"/><rect x="150.4" y="15.8" width="4" height="4" fill="#c39652"/><rect x="159.8" y="16.7" width="4" height="4" fill="#c39652"/><rect x="169.2" y="17.5" width="4" height="4" fill="#c39652"/></g>
<rect x="51" y="61.500" width="92.500" height="36" fill="url(#scr2)"/>
<path d="M51 97h93v10h-93z" fill="#3a3746"/>
<g fill="#c9d6f5" opacity="0.800"><rect x="64" y="68" width="22" height="1.500"/><rect x="92" y="69" width="18" height="1.300"/><rect x="64" y="73.500" width="34" height="1.500"/><rect x="104" y="74.500" width="24" height="1.300"/><rect x="64" y="79" width="62" height="1.500"/><rect x="68" y="83" width="30" height="1.300"/><rect x="64" y="87.500" width="30" height="1.500"/><rect x="64" y="93" width="40" height="1.500"/><rect x="58" y="68" width="2" height="1.500"/><rect x="58" y="73.500" width="2" height="1.500"/><rect x="58" y="79" width="2" height="1.500"/><rect x="58" y="87.500" width="2" height="1.500"/><rect x="58" y="93" width="2" height="1.500"/></g>
<path d="M86 70l8 6 8-3 4 5-10 4-10-4z" fill="#2c8fe0" opacity="0.500"/>
<g filter="url(#bl2)"><ellipse cx="121" cy="102" rx="20" ry="4.500" fill="#f7d9b0"/><ellipse cx="122" cy="102" rx="11" ry="2.500" fill="#ffffff"/></g>
<path d="M58 104h55" stroke="#3e6fd0" stroke-width="1" opacity="0.700"/>
<g filter="url(#bl2b)" opacity="0.750"><rect x="146" y="55" width="5" height="50" fill="#c8a784"/><rect x="156" y="60" width="4" height="46" fill="#b9906c"/><rect x="164" y="58" width="5" height="48" fill="#c4a07c"/><rect x="30" y="48" width="5" height="58" fill="#a8866a"/><rect x="18" y="52" width="4" height="54" fill="#9c7558"/><rect x="40" y="50" width="4" height="54" fill="#a08068"/></g>
<rect x="49" y="97" width="5" height="11" fill="#1b1512"/><rect x="48.500" y="93" width="4" height="5" fill="#e9e3da"/>
<rect x="85" y="99" width="4" height="9" fill="#1b1512"/><rect x="166" y="100" width="6" height="9" fill="#1b1512"/><rect x="16" y="100" width="6" height="9" fill="#1b1512"/>
<path d="M0 108h182v13h-182z" fill="#2a2522"/>
<g filter="url(#bl2b)"><ellipse cx="156.2" cy="117.2" rx="2.4" ry="1.4" fill="#8c8a88"/><ellipse cx="17.6" cy="119.4" rx="2.9" ry="1.5" fill="#5a5654"/><ellipse cx="133.9" cy="115" rx="3.1" ry="2" fill="#c0bcb6"/><ellipse cx="142.5" cy="117.8" rx="3.1" ry="1.2" fill="#5a5654"/><ellipse cx="80.1" cy="115.7" rx="3.5" ry="1.3" fill="#a9a6a2"/><ellipse cx="85.7" cy="115.5" rx="3" ry="1.7" fill="#77736f"/><ellipse cx="10.3" cy="118.4" rx="3.2" ry="2" fill="#c0bcb6"/><ellipse cx="112.8" cy="117.7" rx="2.4" ry="1.9" fill="#c0bcb6"/><ellipse cx="83.2" cy="116" rx="3.4" ry="1.4" fill="#8c8a88"/><ellipse cx="98.9" cy="119.1" rx="2.4" ry="1.2" fill="#a9a6a2"/><ellipse cx="80.6" cy="114.4" rx="2.8" ry="2" fill="#77736f"/><ellipse cx="25.9" cy="115.1" rx="2.4" ry="1.6" fill="#a9a6a2"/><ellipse cx="84.5" cy="115.3" rx="2.5" ry="1.7" fill="#8c8a88"/><ellipse cx="41" cy="117.5" rx="3.5" ry="2.1" fill="#5a5654"/><ellipse cx="165.6" cy="118.3" rx="3.6" ry="2.1" fill="#77736f"/><ellipse cx="103.6" cy="118.6" rx="3.5" ry="1.4" fill="#77736f"/><ellipse cx="107.3" cy="117.7" rx="2.4" ry="1.7" fill="#8c8a88"/><ellipse cx="152.2" cy="114.9" rx="3.4" ry="1.6" fill="#8c8a88"/><ellipse cx="147.9" cy="117" rx="2" ry="1.3" fill="#a9a6a2"/><ellipse cx="80" cy="112.8" rx="3.4" ry="1.7" fill="#8c8a88"/><ellipse cx="150.2" cy="119.2" rx="3" ry="1.6" fill="#8c8a88"/><ellipse cx="177.9" cy="117.8" rx="3.5" ry="1.7" fill="#5a5654"/><ellipse cx="145.8" cy="115.6" rx="3.2" ry="1.7" fill="#5a5654"/><ellipse cx="35.7" cy="115.4" rx="4" ry="1.2" fill="#77736f"/><ellipse cx="89.6" cy="112.9" rx="2.1" ry="1.7" fill="#c0bcb6"/><ellipse cx="44.2" cy="117.3" rx="2.6" ry="1.3" fill="#c0bcb6"/><ellipse cx="62.6" cy="113.4" rx="3.7" ry="2" fill="#5a5654"/><ellipse cx="59.9" cy="117.4" rx="3.9" ry="2.1" fill="#8c8a88"/><ellipse cx="139" cy="119" rx="2.1" ry="1.7" fill="#8c8a88"/><ellipse cx="87.7" cy="115.5" rx="2.8" ry="1.8" fill="#a9a6a2"/><ellipse cx="105.6" cy="119.8" rx="2.5" ry="1.5" fill="#c0bcb6"/><ellipse cx="21.8" cy="114.4" rx="2.6" ry="1.3" fill="#77736f"/><ellipse cx="66.2" cy="119.6" rx="4" ry="2.1" fill="#8c8a88"/><ellipse cx="68" cy="112.8" rx="2.2" ry="2.1" fill="#5a5654"/><ellipse cx="63.1" cy="117.5" rx="3.4" ry="2.1" fill="#77736f"/><ellipse cx="109.5" cy="119.1" rx="2.5" ry="2" fill="#5a5654"/><ellipse cx="93.4" cy="114.8" rx="2.2" ry="1.7" fill="#c0bcb6"/><ellipse cx="159.6" cy="115.3" rx="3.2" ry="1.6" fill="#a9a6a2"/><ellipse cx="80.2" cy="113.1" rx="2.6" ry="1.2" fill="#77736f"/><ellipse cx="142.8" cy="115.4" rx="2.2" ry="1.2" fill="#c0bcb6"/><ellipse cx="30.9" cy="114.4" rx="2.2" ry="2" fill="#c0bcb6"/><ellipse cx="163.5" cy="112.5" rx="2.6" ry="1.5" fill="#8c8a88"/><ellipse cx="81.2" cy="113.9" rx="2.9" ry="1.4" fill="#77736f"/><ellipse cx="63.8" cy="117.5" rx="3.1" ry="1.6" fill="#c0bcb6"/><ellipse cx="87.1" cy="115.7" rx="2.4" ry="1.7" fill="#8c8a88"/><ellipse cx="61.6" cy="117" rx="2.9" ry="1.5" fill="#8c8a88"/></g>
</svg>
<svg id="img3" style="left:417px;top:360px" width="361" height="218" viewBox="0 0 361 218">
<defs><filter id="b3a" x="-10%" y="-10%" width="120%" height="120%"><feGaussianBlur stdDeviation="0.600"/></filter><filter id="b3b" x="-20%" y="-20%" width="140%" height="140%"><feGaussianBlur stdDeviation="1.500"/></filter>
<linearGradient id="colg" x1="0" x2="0" y1="0" y2="1"><stop offset="0" stop-color="#8a8176"/><stop offset="0.500" stop-color="#4e443c"/><stop offset="1" stop-color="#261c16"/></linearGradient><clipPath id="c3"><rect width="361" height="218"/></clipPath></defs>
<g clip-path="url(#c3)">
<rect width="361" height="218" fill="#21130d"/>
<path d="M0 0h361v34c-60-24-120-30-180-30c-60 0-120 6-181 30z" fill="#5f4c30"/>
<g filter="url(#b3a)"><ellipse cx="163.3" cy="1.1" rx="5.7" ry="2.3" fill="#55603a"/><ellipse cx="68.6" cy="10" rx="6.8" ry="2.2" fill="#55603a"/><ellipse cx="34" cy="6.3" rx="6.2" ry="2.3" fill="#6d7a3c"/><ellipse cx="229" cy="1.9" rx="8.8" ry="2" fill="#b1492a"/><ellipse cx="222.2" cy="0.4" rx="8" ry="1.1" fill="#8a7a4e"/><ellipse cx="12.9" cy="23.6" rx="7.7" ry="1.5" fill="#8a7a4e"/><ellipse cx="213.3" cy="0.4" rx="6.8" ry="1.7" fill="#c9b88e"/><ellipse cx="239.1" cy="1.9" rx="5.4" ry="1.8" fill="#3a2c1e"/><ellipse cx="336.3" cy="2" rx="4.9" ry="1.3" fill="#3a2c1e"/><ellipse cx="104.3" cy="0.4" rx="5.4" ry="2.3" fill="#6d7a3c"/><ellipse cx="139.5" cy="2.4" rx="4.3" ry="2.4" fill="#8a7a4e"/><ellipse cx="18.9" cy="9.4" rx="5.5" ry="1.8" fill="#b1492a"/><ellipse cx="71.7" cy="8" rx="3.5" ry="1.5" fill="#7c6a44"/><ellipse cx="348" cy="20.6" rx="3.8" ry="2.1" fill="#6d7a3c"/><ellipse cx="4" cy="13.8" rx="4.1" ry="1.8" fill="#55603a"/><ellipse cx="161.5" cy="0.4" rx="5.5" ry="1.6" fill="#a23c1e"/><ellipse cx="142.5" cy="2.3" rx="4.6" ry="2.5" fill="#8a7a4e"/><ellipse cx="290" cy="3.7" rx="4.3" ry="1.6" fill="#8a7a4e"/><ellipse cx="308.4" cy="10.4" rx="3.3" ry="1.2" fill="#6d7a3c"/><ellipse cx="159.4" cy="0" rx="8" ry="1.6" fill="#7c6a44"/><ellipse cx="26.8" cy="4.7" rx="3.1" ry="1.6" fill="#c9b88e"/><ellipse cx="224.6" cy="0.4" rx="8" ry="1.2" fill="#55603a"/><ellipse cx="139.4" cy="1.6" rx="8.5" ry="2.2" fill="#3a2c1e"/><ellipse cx="90.1" cy="1.6" rx="4.2" ry="2.4" fill="#d8caa4"/><ellipse cx="318.5" cy="11.3" rx="3.3" ry="1.2" fill="#b1492a"/><ellipse cx="185" cy="0.5" rx="4.5" ry="2.2" fill="#b1492a"/><ellipse cx="215.3" cy="0.6" rx="8.6" ry="2.5" fill="#a23c1e"/><ellipse cx="45.6" cy="8.5" rx="4.7" ry="2.4" fill="#6d7a3c"/><ellipse cx="73.6" cy="0.2" rx="5.5" ry="1.4" fill="#3a2c1e"/><ellipse cx="16.8" cy="7.2" rx="6.4" ry="1.2" fill="#d8caa4"/><ellipse cx="130.7" cy="2.9" rx="6.9" ry="2" fill="#7c6a44"/><ellipse cx="211" cy="0.3" rx="8.5" ry="1.7" fill="#8a7a4e"/><ellipse cx="129" cy="1.1" rx="3.1" ry="2" fill="#8a7a4e"/><ellipse cx="174.1" cy="1.5" rx="3.8" ry="1.1" fill="#7c6a44"/><ellipse cx="163.6" cy="0.7" rx="8.4" ry="2.1" fill="#8a7a4e"/><ellipse cx="254" cy="4.8" rx="5.1" ry="2" fill="#7c6a44"/><ellipse cx="325.2" cy="17.9" rx="8.7" ry="1" fill="#b1492a"/><ellipse cx="180.5" cy="0" rx="5.3" ry="1" fill="#b1492a"/><ellipse cx="26.1" cy="2.1" rx="9" ry="2.3" fill="#6d7a3c"/><ellipse cx="262.9" cy="2.9" rx="5.6" ry="2.3" fill="#55603a"/><ellipse cx="30.2" cy="16.3" rx="4.9" ry="1.1" fill="#8a7a4e"/><ellipse cx="8" cy="27.2" rx="6" ry="1.9" fill="#6d7a3c"/><ellipse cx="332.3" cy="5.7" rx="5.2" ry="1.2" fill="#8a7a4e"/><ellipse cx="220.8" cy="1.3" rx="7" ry="1.7" fill="#7c6a44"/><ellipse cx="321.9" cy="6.4" rx="4.2" ry="1.6" fill="#3a2c1e"/><ellipse cx="291" cy="11.3" rx="5.3" ry="1.9" fill="#c9b88e"/><ellipse cx="114.3" cy="0.7" rx="5.1" ry="2.3" fill="#55603a"/><ellipse cx="14.6" cy="1.7" rx="7.9" ry="1.2" fill="#3a2c1e"/><ellipse cx="170.2" cy="1.9" rx="5.3" ry="1.8" fill="#b1492a"/><ellipse cx="242.6" cy="3.3" rx="4.9" ry="2.2" fill="#55603a"/><ellipse cx="100.4" cy="4.2" rx="6.4" ry="1.5" fill="#3a2c1e"/><ellipse cx="285.7" cy="0.2" rx="5.4" ry="1.3" fill="#a23c1e"/><ellipse cx="277.7" cy="2.6" rx="7.8" ry="2.5" fill="#a23c1e"/><ellipse cx="41.6" cy="2" rx="6.9" ry="2.2" fill="#d8caa4"/><ellipse cx="346" cy="18.2" rx="7.9" ry="1.4" fill="#c9b88e"/><ellipse cx="257.8" cy="5" rx="7.3" ry="1.3" fill="#d8caa4"/><ellipse cx="98.3" cy="2.5" rx="6" ry="2.5" fill="#d8caa4"/><ellipse cx="57.5" cy="12.6" rx="3.5" ry="2.4" fill="#c9b88e"/><ellipse cx="260.8" cy="0.9" rx="4.2" ry="2.3" fill="#55603a"/><ellipse cx="2.4" cy="16.6" rx="7.8" ry="2.4" fill="#d8caa4"/></g>
<path d="M0 0h50l-28 14-22 12z" fill="#4a4438"/><path d="M4 4h30l-16 8-14 7z" fill="#7d745e"/>
<path d="M361 0h-50l28 14 22 12z" fill="#4a4438"/><path d="M357 4h-30l16 8 14 7z" fill="#8a8068"/>
<path d="M0 31c60-22 120-28 180-28c60 0 120 6 181 28" fill="none" stroke="#b89455" stroke-width="1.600"/>
<path d="M0 36c60-23 120-29 180-29c60 0 120 6 181 29" fill="none" stroke="#6a4424" stroke-width="2"/>
<ellipse cx="60" cy="6" rx="2.600" ry="1" fill="#f3ead2"/>
<ellipse cx="78" cy="4.5" rx="2.600" ry="1" fill="#f3ead2"/>
<ellipse cx="100" cy="3.5" rx="2.600" ry="1" fill="#f3ead2"/>
<ellipse cx="255" cy="3.5" rx="2.600" ry="1" fill="#f3ead2"/>
<ellipse cx="280" cy="5" rx="2.600" ry="1" fill="#f3ead2"/>
<ellipse cx="300" cy="7" rx="2.600" ry="1" fill="#f3ead2"/>
<ellipse cx="40" cy="12" rx="2.600" ry="1" fill="#f3ead2"/>
<ellipse cx="320" cy="12" rx="2.600" ry="1" fill="#f3ead2"/>
<g filter="url(#b3a)" opacity="0.900"><rect x="118" y="17.5" width="3.800" height="3.800" fill="#c8893c"/><rect x="126.6" y="17.5" width="3.800" height="3.800" fill="#c8893c"/><rect x="135.2" y="17.5" width="3.800" height="3.800" fill="#c8893c"/><rect x="143.8" y="17.5" width="3.800" height="3.800" fill="#c8893c"/><rect x="152.4" y="17.5" width="3.800" height="3.800" fill="#c8893c"/><rect x="161" y="17.5" width="3.800" height="3.800" fill="#c8893c"/><rect x="169.6" y="17.5" width="3.800" height="3.800" fill="#c8893c"/><rect x="178.2" y="17.5" width="3.800" height="3.800" fill="#c8893c"/><rect x="186.8" y="17.5" width="3.800" height="3.800" fill="#c8893c"/><rect x="195.4" y="17.5" width="3.800" height="3.800" fill="#c8893c"/><rect x="204" y="17.5" width="3.800" height="3.800" fill="#c8893c"/><rect x="212.6" y="17.5" width="3.800" height="3.800" fill="#c8893c"/><rect x="221.2" y="17.5" width="3.800" height="3.800" fill="#c8893c"/><rect x="229.8" y="17.5" width="3.800" height="3.800" fill="#c8893c"/><rect x="238.4" y="17.5" width="3.800" height="3.800" fill="#c8893c"/></g>
<path d="M11 30c0-5 5-5 5 0v56h-5z" fill="url(#colg)"/>
<ellipse cx="13.5" cy="31" rx="1.600" ry="3.500" fill="#a89a80"/>
<path d="M18 30c0-5 5-5 5 0v56h-5z" fill="url(#colg)"/>
<ellipse cx="20.5" cy="31" rx="1.600" ry="3.500" fill="#a89a80"/>
<path d="M26 30c0-5 5-5 5 0v56h-5z" fill="url(#colg)"/>
<ellipse cx="28.5" cy="31" rx="1.600" ry="3.500" fill="#a89a80"/>
<path d="M33 30c0-5 5-5 5 0v56h-5z" fill="url(#colg)"/>
<ellipse cx="35.5" cy="31" rx="1.600" ry="3.500" fill="#a89a80"/>
<path d="M323 30c0-5 5-5 5 0v56h-5z" fill="url(#colg)"/>
<ellipse cx="325.5" cy="31" rx="1.600" ry="3.500" fill="#a88a64"/>
<path d="M330 30c0-5 5-5 5 0v56h-5z" fill="url(#colg)"/>
<ellipse cx="332.5" cy="31" rx="1.600" ry="3.500" fill="#a88a64"/>
<path d="M338 30c0-5 5-5 5 0v56h-5z" fill="url(#colg)"/>
<ellipse cx="340.5" cy="31" rx="1.600" ry="3.500" fill="#a88a64"/>
<path d="M345 30c0-5 5-5 5 0v56h-5z" fill="url(#colg)"/>
<ellipse cx="347.5" cy="31" rx="1.600" ry="3.500" fill="#a88a64"/>
<rect x="88" y="29" width="189" height="69" fill="#7a3016"/>
<rect x="88" y="29" width="189" height="12" fill="#9c4a26"/>
<g filter="url(#b3b)"><rect x="116" y="46" width="25" height="50" fill="#b88464"/><rect x="225" y="46" width="27" height="50" fill="#bd8a6a"/><rect x="143" y="40" width="80" height="16" fill="#a04a28"/></g>
<g opacity="0.750"><rect x="175.2" y="38.8" width="1" height="28.2" fill="#b85c34"/><rect x="133.6" y="34.9" width="1.500" height="23.5" fill="#9a4020"/><rect x="137.2" y="39.8" width="1" height="20.6" fill="#963c1c"/><rect x="95" y="34.1" width="2" height="36.9" fill="#9a4020"/><rect x="260.9" y="32.3" width="1" height="54.7" fill="#5e2210"/><rect x="120.5" y="34" width="2" height="51.5" fill="#7a2e16"/><rect x="116" y="36.7" width="2" height="48.9" fill="#8a3418"/><rect x="196.8" y="39.3" width="1.500" height="50.3" fill="#8a3418"/><rect x="244.3" y="37.4" width="1.500" height="26.6" fill="#963c1c"/><rect x="146.6" y="34.7" width="1.500" height="53.8" fill="#d8a484"/><rect x="247.9" y="43.5" width="1" height="41" fill="#8a3418"/><rect x="165.3" y="30.7" width="1" height="20.2" fill="#5e2210"/><rect x="189.2" y="29.7" width="1" height="56.7" fill="#963c1c"/><rect x="180.3" y="39.4" width="2" height="22.6" fill="#963c1c"/><rect x="165.8" y="43.4" width="1" height="56.9" fill="#9a4020"/><rect x="177" y="30.9" width="1.500" height="37.3" fill="#8a3418"/><rect x="108.4" y="35.3" width="1" height="21.2" fill="#9a4020"/><rect x="220" y="43.7" width="1" height="21.4" fill="#7a2e16"/><rect x="90.2" y="33.3" width="2" height="48.9" fill="#d8a484"/><rect x="107.7" y="40" width="1.500" height="24.9" fill="#963c1c"/><rect x="222.9" y="39.5" width="2" height="55.1" fill="#a84a26"/><rect x="207" y="41.4" width="1" height="44.6" fill="#963c1c"/><rect x="250.4" y="37" width="1" height="28.7" fill="#d8a484"/><rect x="131.7" y="40.1" width="1.500" height="52.4" fill="#7a2e16"/><rect x="201.4" y="42.4" width="1" height="27.8" fill="#d8a484"/><rect x="113.2" y="32.6" width="2" height="49.1" fill="#9a4020"/><rect x="106.2" y="41.5" width="1" height="36.9" fill="#7a2e16"/><rect x="163.7" y="39.3" width="1.500" height="20.7" fill="#d8a484"/><rect x="259.3" y="43.5" width="1.500" height="24.6" fill="#963c1c"/><rect x="182.5" y="39.3" width="2" height="27.6" fill="#b85c34"/><rect x="108" y="29.6" width="2" height="42.1" fill="#963c1c"/><rect x="115.6" y="31.8" width="1.500" height="28.2" fill="#7a2e16"/><rect x="262.3" y="30.4" width="1" height="22.5" fill="#8a3418"/><rect x="231.8" y="33.9" width="1.500" height="38.7" fill="#963c1c"/><rect x="168.9" y="38" width="1" height="20.5" fill="#a84a26"/><rect x="122.1" y="35.8" width="1" height="49.6" fill="#5e2210"/><rect x="201.7" y="30.4" width="1" height="51.7" fill="#6e2812"/><rect x="238.7" y="39.6" width="1" height="54.4" fill="#5e2210"/><rect x="182.8" y="43.7" width="1.500" height="52.2" fill="#9a4020"/><rect x="259.3" y="40.2" width="1" height="51.1" fill="#5e2210"/><rect x="256.6" y="42.2" width="1" height="47.8" fill="#5e2210"/><rect x="164.3" y="39.8" width="1.500" height="22.8" fill="#6e2812"/><rect x="176.1" y="29.2" width="1" height="34.2" fill="#a84a26"/><rect x="139.3" y="43.4" width="2" height="32" fill="#d8a484"/><rect x="195.1" y="37" width="1" height="35.6" fill="#8a3418"/><rect x="219.8" y="40.4" width="1" height="59.2" fill="#a84a26"/><rect x="203.7" y="40.1" width="1" height="30.3" fill="#5e2210"/><rect x="231.1" y="38.7" width="1.500" height="20.4" fill="#9a4020"/><rect x="139.8" y="34.1" width="1" height="41.6" fill="#5e2210"/><rect x="207.9" y="41.1" width="2" height="23" fill="#a84a26"/><rect x="262.9" y="31.4" width="2" height="38.9" fill="#7a2e16"/><rect x="189.9" y="37.9" width="2" height="37.2" fill="#8a3418"/><rect x="141.5" y="35" width="1.500" height="32.5" fill="#963c1c"/><rect x="178.8" y="33" width="1" height="57.2" fill="#9a4020"/><rect x="90.6" y="32.7" width="2" height="21.7" fill="#7a2e16"/><rect x="229.9" y="34.8" width="1" height="55.9" fill="#5e2210"/><rect x="197.4" y="39.8" width="2" height="32.8" fill="#d8a484"/><rect x="223.2" y="32.8" width="1" height="50.2" fill="#a84a26"/><rect x="264.2" y="39.8" width="1" height="38.7" fill="#d8a484"/><rect x="97.5" y="35.3" width="1.500" height="24.7" fill="#a84a26"/><rect x="187.3" y="30.9" width="2" height="37.7" fill="#5e2210"/><rect x="201" y="38.6" width="1" height="47.3" fill="#6e2812"/><rect x="267.1" y="40" width="1.500" height="29.5" fill="#b85c34"/><rect x="235.5" y="38.4" width="1" height="34.4" fill="#9a4020"/><rect x="207" y="40.3" width="1" height="27.6" fill="#d8a484"/><rect x="253.2" y="29.6" width="1.500" height="22.4" fill="#9a4020"/><rect x="167.9" y="38.4" width="1.500" height="24.1" fill="#963c1c"/><rect x="101.6" y="30.3" width="1" height="47.1" fill="#963c1c"/><rect x="206.6" y="34.6" width="1.500" height="39.1" fill="#d8a484"/><rect x="152.6" y="40.2" width="1" height="53.5" fill="#b85c34"/><rect x="172.1" y="41.3" width="2" height="53.5" fill="#d8a484"/><rect x="167.8" y="32.9" width="1" height="52.4" fill="#6e2812"/><rect x="210.9" y="43.8" width="1" height="33" fill="#963c1c"/><rect x="168.4" y="34.5" width="1" height="23.9" fill="#6e2812"/><rect x="190.2" y="35.5" width="1.500" height="42.7" fill="#8a3418"/><rect x="242.8" y="29.1" width="1.500" height="32.4" fill="#b85c34"/><rect x="181" y="40.5" width="1" height="33.1" fill="#7a2e16"/><rect x="155.3" y="39.9" width="1.500" height="34.7" fill="#b85c34"/><rect x="221.3" y="37.5" width="2" height="56.7" fill="#9a4020"/><rect x="187.7" y="43.9" width="2" height="38.3" fill="#d8a484"/><rect x="269.9" y="39.9" width="1.500" height="40.6" fill="#b85c34"/><rect x="243.8" y="29.4" width="1" height="47.1" fill="#5e2210"/><rect x="226.9" y="34.5" width="1" height="35.6" fill="#7a2e16"/><rect x="121.2" y="40.4" width="1" height="55.2" fill="#9a4020"/><rect x="129.6" y="29.9" width="1" height="26.3" fill="#9a4020"/><rect x="210.4" y="41.1" width="1.500" height="22.6" fill="#963c1c"/><rect x="236.2" y="30.3" width="1.500" height="23.3" fill="#b85c34"/><rect x="103.9" y="38.5" width="1" height="25.8" fill="#5e2210"/><rect x="221.9" y="36.3" width="2" height="56.3" fill="#6e2812"/><rect x="162.1" y="34.1" width="2" height="58.7" fill="#7a2e16"/><rect x="179.8" y="41.1" width="2" height="22.9" fill="#a84a26"/><rect x="230.3" y="43.8" width="2" height="34" fill="#a84a26"/><rect x="244.8" y="42.3" width="1.500" height="58.3" fill="#a84a26"/><rect x="221.5" y="41" width="1" height="36.9" fill="#5e2210"/><rect x="134.2" y="31.4" width="1.500" height="45.4" fill="#7a2e16"/><rect x="126.4" y="35.4" width="2" height="31.7" fill="#a84a26"/><rect x="146" y="30.7" width="1" height="45.9" fill="#7a2e16"/><rect x="229.6" y="29.3" width="1.500" height="39.2" fill="#a84a26"/><rect x="108.4" y="31.8" width="2" height="28.7" fill="#d8a484"/><rect x="199.8" y="32.4" width="2" height="27.4" fill="#9a4020"/><rect x="120.4" y="40.4" width="2" height="32.5" fill="#963c1c"/><rect x="248.4" y="36.3" width="1" height="36.1" fill="#6e2812"/><rect x="178.7" y="32.3" width="2" height="22" fill="#7a2e16"/><rect x="271.5" y="40.9" width="1" height="51" fill="#a84a26"/><rect x="255.7" y="42.1" width="1" height="56.2" fill="#8a3418"/><rect x="222.1" y="38.1" width="1.500" height="26.3" fill="#7a2e16"/><rect x="115.2" y="42.6" width="1.500" height="52.4" fill="#7a2e16"/><rect x="185" y="29.8" width="1" height="42.9" fill="#7a2e16"/><rect x="126.4" y="42.7" width="1" height="26" fill="#7a2e16"/><rect x="154.1" y="38.2" width="2" height="41.1" fill="#8a3418"/></g>
<rect x="143.500" y="56" width="79.500" height="38.500" fill="#5674b0"/>
<rect x="143.500" y="56" width="79.500" height="11" fill="#1c2030"/>
<g filter="url(#b3a)"><rect x="150.2" y="85" width="7.1" height="2.3" fill="#f4f6fa"/><rect x="203.2" y="75.7" width="2.5" height="3.6" fill="#c4d4ec"/><rect x="159.6" y="79.2" width="5" height="3.9" fill="#f4f6fa"/><rect x="216.3" y="72.9" width="2.5" height="2.3" fill="#f4f6fa"/><rect x="179" y="84" width="2.4" height="1.9" fill="#3a62b0"/><rect x="194.1" y="82.9" width="7.8" height="3.6" fill="#22283a"/><rect x="193" y="64.3" width="6.3" height="2.7" fill="#f4f6fa"/><rect x="166" y="67.2" width="7.1" height="3.6" fill="#e6ecf4"/><rect x="197.9" y="89.2" width="3.7" height="2.4" fill="#7aa4e0"/><rect x="184.5" y="72.3" width="6.5" height="2.9" fill="#3a62b0"/><rect x="150.5" y="69.3" width="6.4" height="2.3" fill="#f4f6fa"/><rect x="214.9" y="79.8" width="5.8" height="2.6" fill="#22283a"/><rect x="172.7" y="66.9" width="2.6" height="3.2" fill="#3868b8"/><rect x="197.1" y="69" width="2.2" height="2.7" fill="#f4f6fa"/><rect x="196.8" y="66.8" width="2.9" height="1.8" fill="#e6ecf4"/><rect x="174.5" y="66" width="7.6" height="1.8" fill="#f4f6fa"/><rect x="159.4" y="68.1" width="4.3" height="2.3" fill="#22283a"/><rect x="174.9" y="64.4" width="5.7" height="2.3" fill="#f4f6fa"/><rect x="203.2" y="70.9" width="5.2" height="2.2" fill="#3868b8"/><rect x="158.2" y="72.6" width="2.6" height="2.4" fill="#9cbce8"/><rect x="182.2" y="86.1" width="5.7" height="1.9" fill="#4a78c8"/><rect x="201.5" y="89.3" width="3.4" height="3" fill="#f4f6fa"/><rect x="182.5" y="80.1" width="7.9" height="2.8" fill="#1a1e2c"/><rect x="197.7" y="87.4" width="5.4" height="1.6" fill="#1a1e2c"/><rect x="193.5" y="85.7" width="3.5" height="2.9" fill="#7aa4e0"/><rect x="196.3" y="73.2" width="3.6" height="3.7" fill="#3a62b0"/><rect x="177.9" y="84.4" width="7.4" height="2.9" fill="#1a1e2c"/><rect x="186.1" y="79.7" width="3" height="3.4" fill="#d4deee"/><rect x="211.3" y="73.4" width="2.7" height="3.6" fill="#7aa4e0"/><rect x="165.6" y="89.1" width="6.5" height="2.4" fill="#1a1e2c"/><rect x="156.4" y="80.7" width="4.7" height="2.5" fill="#4a78c8"/><rect x="202.7" y="90" width="2.8" height="3.4" fill="#c4d4ec"/><rect x="207.6" y="89.4" width="5.6" height="3.5" fill="#3868b8"/><rect x="145.2" y="69.6" width="2.2" height="2.8" fill="#9cbce8"/><rect x="152.9" y="75.4" width="5.1" height="2.2" fill="#3a62b0"/><rect x="186.6" y="73.3" width="6.7" height="3.3" fill="#c4d4ec"/><rect x="203.1" y="75.3" width="5.6" height="2.7" fill="#9cbce8"/><rect x="174.9" y="81.5" width="5.4" height="2.5" fill="#22283a"/><rect x="165.1" y="88.9" width="7" height="3.6" fill="#9cbce8"/><rect x="174.7" y="76.2" width="2.7" height="3.8" fill="#3868b8"/><rect x="168.8" y="78.6" width="7.4" height="2.3" fill="#f4f6fa"/><rect x="148.1" y="84.3" width="6.4" height="3" fill="#f4f6fa"/><rect x="200.4" y="72.5" width="7.3" height="2.1" fill="#3868b8"/><rect x="207.3" y="70.8" width="7.8" height="2.7" fill="#f4f6fa"/><rect x="151.9" y="89.5" width="3.8" height="2.5" fill="#f4f6fa"/><rect x="161.7" y="65.9" width="7.8" height="3.2" fill="#22283a"/><rect x="209" y="75.8" width="3.3" height="3.4" fill="#7aa4e0"/><rect x="186.5" y="89.3" width="5.1" height="1.8" fill="#4a78c8"/><rect x="210.2" y="80.1" width="2" height="2.1" fill="#9cbce8"/><rect x="166.4" y="73.1" width="4.6" height="2.6" fill="#4a78c8"/><rect x="183.8" y="68" width="5.5" height="1.6" fill="#22283a"/><rect x="146.3" y="89.2" width="3.9" height="1.9" fill="#d4deee"/><rect x="202.2" y="85.7" width="3.2" height="3.6" fill="#1a1e2c"/><rect x="195.9" y="65.7" width="7" height="2.4" fill="#3a62b0"/><rect x="179.4" y="68.8" width="8" height="2" fill="#22283a"/><rect x="191.4" y="69.4" width="5.9" height="2.3" fill="#e6ecf4"/><rect x="205.3" y="90.9" width="7.2" height="3.3" fill="#d4deee"/><rect x="154.1" y="83.5" width="4.5" height="1.9" fill="#9cbce8"/><rect x="208.6" y="67.4" width="3.2" height="2" fill="#22283a"/><rect x="161.7" y="82.6" width="4.2" height="3.2" fill="#d4deee"/><rect x="210.3" y="80.5" width="7.9" height="3.7" fill="#1a1e2c"/><rect x="157.5" y="70.3" width="5.8" height="1.7" fill="#7aa4e0"/><rect x="217.7" y="76.3" width="2.4" height="3.8" fill="#f4f6fa"/><rect x="144.5" y="80.4" width="3.5" height="3.5" fill="#f4f6fa"/><rect x="150.5" y="72" width="3.5" height="2.2" fill="#1a1e2c"/><rect x="185.1" y="69.2" width="7.9" height="1.6" fill="#7aa4e0"/><rect x="178.6" y="85" width="2" height="3.7" fill="#f4f6fa"/><rect x="148.5" y="65.8" width="7.5" height="2.3" fill="#c4d4ec"/><rect x="180.3" y="64.9" width="5" height="3.6" fill="#d4deee"/><rect x="195.3" y="78.6" width="3" height="3.4" fill="#f4f6fa"/><rect x="156.4" y="81" width="6" height="2.9" fill="#1a1e2c"/><rect x="163.2" y="84.1" width="3.4" height="2.7" fill="#22283a"/><rect x="160.6" y="80.2" width="3.6" height="2" fill="#9cbce8"/><rect x="216.8" y="65.5" width="7.2" height="2" fill="#9cbce8"/><rect x="155.4" y="64.5" width="6.8" height="2.8" fill="#9cbce8"/><rect x="198.2" y="88" width="2.4" height="3.8" fill="#e6ecf4"/><rect x="186.7" y="79.2" width="3.4" height="1.9" fill="#22283a"/><rect x="167.3" y="65.2" width="6.9" height="3.3" fill="#3a62b0"/><rect x="202.6" y="85.4" width="2.5" height="3.6" fill="#9cbce8"/><rect x="156.9" y="71.1" width="5" height="3.1" fill="#7aa4e0"/></g>
<ellipse cx="160" cy="64" rx="5.500" ry="4" fill="#15141a"/><ellipse cx="160" cy="68.500" rx="3" ry="3" fill="#d9b090"/><ellipse cx="160" cy="78" rx="7" ry="6" fill="#33456e"/>
<ellipse cx="183" cy="64" rx="5.500" ry="4" fill="#15141a"/><ellipse cx="183" cy="68.500" rx="3" ry="3" fill="#d9b090"/><ellipse cx="183" cy="78" rx="7" ry="6" fill="#33456e"/>
<ellipse cx="206" cy="64" rx="5.500" ry="4" fill="#15141a"/><ellipse cx="206" cy="68.500" rx="3" ry="3" fill="#d9b090"/><ellipse cx="206" cy="78" rx="7" ry="6" fill="#33456e"/>
<rect x="143.500" y="88" width="79.500" height="6" fill="#2e50a0" opacity="0.800"/>
<g fill="#e8eef8"><rect x="148" y="89.500" width="3" height="3"/><rect x="153.2" y="89.500" width="3" height="3"/><rect x="158.4" y="89.500" width="3" height="3"/><rect x="163.6" y="89.500" width="3" height="3"/><rect x="168.8" y="89.500" width="3" height="3"/><rect x="174" y="89.500" width="3" height="3"/><rect x="179.2" y="89.500" width="3" height="3"/><rect x="184.4" y="89.500" width="3" height="3"/><rect x="189.6" y="89.500" width="3" height="3"/><rect x="194.8" y="89.500" width="3" height="3"/><rect x="200" y="89.500" width="3" height="3"/><rect x="205.2" y="89.500" width="3" height="3"/><rect x="210.4" y="89.500" width="3" height="3"/><rect x="215.6" y="89.500" width="3" height="3"/></g>
<rect x="87" y="95" width="191" height="4.500" fill="#d6bf9c"/>
<rect x="86" y="99.500" width="193" height="10" fill="#1a0f0b"/>
<rect x="131" y="87" width="5" height="11" fill="#1a1210"/><rect x="132" y="83" width="3" height="4" fill="#e8e0d4"/><rect x="235" y="88" width="5" height="10" fill="#1a1210"/>
<rect x="40" y="62" width="25" height="21" fill="#d95f24"/><rect x="42" y="66" width="21" height="2" fill="#f2b48a"/><rect x="40" y="62" width="25" height="21" fill="none" stroke="#3a2218" stroke-width="1"/>
<rect x="299" y="62" width="24" height="21" fill="#d95f24"/><rect x="301" y="66" width="20" height="2" fill="#f2b48a"/><rect x="299" y="62" width="24" height="21" fill="none" stroke="#3a2218" stroke-width="1"/>
<path d="M0 116c60-5 120-7 180-7c60 0 120 2 181 7v102h-361z" fill="#453b36"/>
<path d="M0 115c60-6 120-8 180-8c60 0 120 2 181 8v5c-60-5-120-7-181-7c-60 0-120 2-180 7z" fill="#a8977c"/>
<path d="M0 170l40 48h-40z" fill="#8a6a48"/><path d="M361 170l-40 48h40z" fill="#8a6a48"/>
<g><path d="M-5 122 Q180 112.2 366 122" fill="none" stroke="#74301a" stroke-width="1.5"/><path d="M-5 118.9 Q180 123 366 118.9" fill="none" stroke="#74301a" stroke-width="2"/><path d="M-5 118.4 Q180 136.3 366 118.4" fill="none" stroke="#74301a" stroke-width="2.6"/><path d="M-5 119.4 Q180 151.1 366 119.4" fill="none" stroke="#74301a" stroke-width="3.1"/><path d="M-5 122.2 Q180 153.9 366 122.2" fill="none" stroke="#1a1310" stroke-width="1.9"/><path d="M-5 121.5 Q180 167.1 366 121.5" fill="none" stroke="#74301a" stroke-width="3.7"/><path d="M-5 124.9 Q180 170.4 366 124.9" fill="none" stroke="#1a1310" stroke-width="2.2"/><path d="M-5 124.7 Q180 184.1 366 124.7" fill="none" stroke="#74301a" stroke-width="4.2"/><path d="M-5 128.5 Q180 187.9 366 128.5" fill="none" stroke="#1a1310" stroke-width="2.5"/><path d="M-5 128.7 Q180 201.9 366 128.7" fill="none" stroke="#74301a" stroke-width="4.8"/><path d="M-5 133 Q180 206.2 366 133" fill="none" stroke="#1a1310" stroke-width="2.9"/><path d="M-5 133.4 Q180 220.5 366 133.4" fill="none" stroke="#74301a" stroke-width="5.3"/><path d="M-5 138.2 Q180 225.3 366 138.2" fill="none" stroke="#1a1310" stroke-width="3.2"/><path d="M-5 138.9 Q180 239.8 366 138.9" fill="none" stroke="#74301a" stroke-width="5.9"/><path d="M-5 144.2 Q180 245.1 366 144.2" fill="none" stroke="#1a1310" stroke-width="3.5"/><path d="M-5 145 Q180 259.7 366 145" fill="none" stroke="#74301a" stroke-width="6.4"/><path d="M-5 150.8 Q180 265.5 366 150.8" fill="none" stroke="#1a1310" stroke-width="3.8"/><path d="M-5 151.7 Q180 280.2 366 151.7" fill="none" stroke="#74301a" stroke-width="7"/><path d="M-5 158 Q180 286.5 366 158" fill="none" stroke="#1a1310" stroke-width="4.2"/><path d="M-5 159 Q180 301.4 366 159" fill="none" stroke="#74301a" stroke-width="7.5"/><path d="M-5 165.8 Q180 308.1 366 165.8" fill="none" stroke="#1a1310" stroke-width="4.5"/></g>
<g filter="url(#b3a)"><rect x="-1" y="119.1" width="3.1" height="2.9" fill="#596068"/><ellipse cx="0.5" cy="118.6" rx="1.7" ry="1.6" fill="#c4bba8"/><ellipse cx="0.5" cy="116.7" rx="1.1" ry="1.1" fill="#191412"/><rect x="1.7" y="114.2" width="2" height="1" fill="#efece4"/><rect x="6.1" y="119" width="3.1" height="2.9" fill="#596068"/><ellipse cx="7.7" cy="118.5" rx="1.7" ry="1.6" fill="#e6e3dc"/><ellipse cx="7.7" cy="116.5" rx="1.1" ry="1.1" fill="#26201c"/><rect x="18.5" y="118.8" width="3.1" height="2.9" fill="#737b83"/><ellipse cx="20.1" cy="118.3" rx="1.7" ry="1.6" fill="#2e3238"/><ellipse cx="20.1" cy="116.4" rx="1.1" ry="1.1" fill="#1d1815"/><rect x="21.3" y="113.9" width="2" height="1" fill="#efece4"/><rect x="30.3" y="118.7" width="3.1" height="2.9" fill="#596068"/><ellipse cx="31.8" cy="118.2" rx="1.7" ry="1.6" fill="#8a8a86"/><ellipse cx="31.8" cy="116.2" rx="1.1" ry="1.1" fill="#2f2824"/><rect x="33" y="113.8" width="2" height="1" fill="#efece4"/><rect x="34.5" y="118.6" width="3.1" height="2.9" fill="#828a92"/><ellipse cx="36" cy="118.1" rx="1.7" ry="1.6" fill="#a39e96"/><ellipse cx="36" cy="116.2" rx="1.1" ry="1.1" fill="#2f2824"/><rect x="37.2" y="113.7" width="2" height="1" fill="#efece4"/><rect x="49.6" y="118.5" width="3.1" height="2.9" fill="#828a92"/><ellipse cx="51.1" cy="118" rx="1.7" ry="1.6" fill="#d2cec6"/><ellipse cx="51.1" cy="116" rx="1.1" ry="1.1" fill="#26201c"/><rect x="52.3" y="113.6" width="2" height="1" fill="#efece4"/><rect x="59.9" y="118.4" width="3.1" height="2.9" fill="#666e76"/><ellipse cx="61.5" cy="117.9" rx="1.7" ry="1.6" fill="#f2f0ea"/><ellipse cx="61.5" cy="115.9" rx="1.1" ry="1.1" fill="#1d1815"/><rect x="62.7" y="113.5" width="2" height="1" fill="#efece4"/><rect x="67.7" y="118.3" width="3.1" height="2.9" fill="#596068"/><ellipse cx="69.2" cy="117.8" rx="1.7" ry="1.6" fill="#6a7480"/><ellipse cx="69.2" cy="115.8" rx="1.1" ry="1.1" fill="#26201c"/><rect x="79.4" y="118.2" width="3.1" height="2.9" fill="#666e76"/><ellipse cx="81" cy="117.7" rx="1.7" ry="1.6" fill="#e9e4d8"/><ellipse cx="81" cy="115.7" rx="1.1" ry="1.1" fill="#1d1815"/><rect x="82.1" y="113.3" width="2" height="1" fill="#efece4"/><rect x="84.5" y="118.1" width="3.1" height="2.9" fill="#666e76"/><ellipse cx="86" cy="117.7" rx="1.7" ry="1.6" fill="#efece5"/><ellipse cx="86" cy="115.7" rx="1.1" ry="1.1" fill="#191412"/><rect x="87.2" y="113.3" width="2" height="1" fill="#efece4"/><rect x="96.6" y="118.1" width="3.1" height="2.9" fill="#596068"/><ellipse cx="98.2" cy="117.6" rx="1.7" ry="1.6" fill="#e0d9ca"/><ellipse cx="98.2" cy="115.6" rx="1.1" ry="1.1" fill="#191412"/><rect x="106.9" y="118" width="3.1" height="2.9" fill="#596068"/><ellipse cx="108.5" cy="117.5" rx="1.7" ry="1.6" fill="#f2f0ea"/><ellipse cx="108.5" cy="115.6" rx="1.1" ry="1.1" fill="#191412"/><rect x="109.7" y="113.1" width="2" height="1" fill="#efece4"/><rect x="116.8" y="117.9" width="3.1" height="2.9" fill="#666e76"/><ellipse cx="118.3" cy="117.5" rx="1.7" ry="1.6" fill="#9fb0c4"/><ellipse cx="118.3" cy="115.5" rx="1.1" ry="1.1" fill="#1d1815"/><rect x="125.3" y="117.9" width="3.1" height="2.9" fill="#737b83"/><ellipse cx="126.9" cy="117.4" rx="1.7" ry="1.6" fill="#f2f0ea"/><ellipse cx="126.9" cy="115.5" rx="1.1" ry="1.1" fill="#2f2824"/><rect x="128.1" y="113" width="2" height="1" fill="#efece4"/><rect x="132.6" y="117.9" width="3.1" height="2.9" fill="#666e76"/><ellipse cx="134.2" cy="117.4" rx="1.7" ry="1.6" fill="#c4bba8"/><ellipse cx="134.2" cy="115.4" rx="1.1" ry="1.1" fill="#26201c"/><rect x="147.5" y="117.8" width="3.1" height="2.9" fill="#596068"/><ellipse cx="149.1" cy="117.3" rx="1.7" ry="1.6" fill="#6a7480"/><ellipse cx="149.1" cy="115.4" rx="1.1" ry="1.1" fill="#191412"/><rect x="150.3" y="112.9" width="2" height="1" fill="#efece4"/><rect x="157.1" y="117.8" width="3.1" height="2.9" fill="#828a92"/><ellipse cx="158.7" cy="117.3" rx="1.7" ry="1.6" fill="#dcd8d0"/><ellipse cx="158.7" cy="115.4" rx="1.1" ry="1.1" fill="#1d1815"/><rect x="159.9" y="112.9" width="2" height="1" fill="#efece4"/><rect x="162.5" y="117.8" width="3.1" height="2.9" fill="#737b83"/><ellipse cx="164.1" cy="117.3" rx="1.7" ry="1.6" fill="#5a6470"/><ellipse cx="164.1" cy="115.4" rx="1.1" ry="1.1" fill="#26201c"/><rect x="165.2" y="112.9" width="2" height="1" fill="#efece4"/><rect x="173.4" y="117.8" width="3.1" height="2.9" fill="#828a92"/><ellipse cx="175" cy="117.3" rx="1.7" ry="1.6" fill="#efece5"/><ellipse cx="175" cy="115.3" rx="1.1" ry="1.1" fill="#2f2824"/><rect x="185" y="117.8" width="3.1" height="2.9" fill="#596068"/><ellipse cx="186.5" cy="117.3" rx="1.7" ry="1.6" fill="#a39e96"/><ellipse cx="186.5" cy="115.3" rx="1.1" ry="1.1" fill="#2f2824"/><rect x="187.7" y="112.9" width="2" height="1" fill="#efece4"/><rect x="192.8" y="117.8" width="3.1" height="2.9" fill="#828a92"/><ellipse cx="194.4" cy="117.3" rx="1.7" ry="1.6" fill="#f2f0ea"/><ellipse cx="194.4" cy="115.4" rx="1.1" ry="1.1" fill="#1d1815"/><rect x="195.5" y="112.9" width="2" height="1" fill="#efece4"/><rect x="204.1" y="117.8" width="3.1" height="2.9" fill="#737b83"/><ellipse cx="205.7" cy="117.3" rx="1.7" ry="1.6" fill="#7f93aa"/><ellipse cx="205.7" cy="115.4" rx="1.1" ry="1.1" fill="#191412"/><rect x="216.4" y="117.8" width="3.1" height="2.9" fill="#828a92"/><ellipse cx="217.9" cy="117.4" rx="1.7" ry="1.6" fill="#d2cec6"/><ellipse cx="217.9" cy="115.4" rx="1.1" ry="1.1" fill="#26201c"/><rect x="226" y="117.9" width="3.1" height="2.9" fill="#737b83"/><ellipse cx="227.5" cy="117.4" rx="1.7" ry="1.6" fill="#f2f0ea"/><ellipse cx="227.5" cy="115.4" rx="1.1" ry="1.1" fill="#2f2824"/><rect x="230" y="117.9" width="3.1" height="2.9" fill="#828a92"/><ellipse cx="231.6" cy="117.4" rx="1.7" ry="1.6" fill="#e0d9ca"/><ellipse cx="231.6" cy="115.4" rx="1.1" ry="1.1" fill="#191412"/><rect x="232.8" y="113" width="2" height="1" fill="#efece4"/><rect x="243.8" y="118" width="3.1" height="2.9" fill="#596068"/><ellipse cx="245.4" cy="117.5" rx="1.7" ry="1.6" fill="#e9e4d8"/><ellipse cx="245.4" cy="115.5" rx="1.1" ry="1.1" fill="#26201c"/><rect x="251.1" y="118" width="3.1" height="2.9" fill="#828a92"/><ellipse cx="252.7" cy="117.5" rx="1.7" ry="1.6" fill="#dcd8d0"/><ellipse cx="252.7" cy="115.6" rx="1.1" ry="1.1" fill="#1d1815"/><rect x="264" y="118.1" width="3.1" height="2.9" fill="#737b83"/><ellipse cx="265.6" cy="117.6" rx="1.7" ry="1.6" fill="#9fb0c4"/><ellipse cx="265.6" cy="115.6" rx="1.1" ry="1.1" fill="#2f2824"/><rect x="269.1" y="118.1" width="3.1" height="2.9" fill="#737b83"/><ellipse cx="270.7" cy="117.6" rx="1.7" ry="1.6" fill="#e9e4d8"/><ellipse cx="270.7" cy="115.7" rx="1.1" ry="1.1" fill="#2f2824"/><rect x="271.8" y="113.2" width="2" height="1" fill="#efece4"/><rect x="283.8" y="118.2" width="3.1" height="2.9" fill="#737b83"/><ellipse cx="285.4" cy="117.7" rx="1.7" ry="1.6" fill="#c4bba8"/><ellipse cx="285.4" cy="115.8" rx="1.1" ry="1.1" fill="#2f2824"/><rect x="286.6" y="113.3" width="2" height="1" fill="#efece4"/><rect x="290.2" y="118.3" width="3.1" height="2.9" fill="#666e76"/><ellipse cx="291.7" cy="117.8" rx="1.7" ry="1.6" fill="#9fb0c4"/><ellipse cx="291.7" cy="115.8" rx="1.1" ry="1.1" fill="#2f2824"/><rect x="300.2" y="118.4" width="3.1" height="2.9" fill="#666e76"/><ellipse cx="301.7" cy="117.9" rx="1.7" ry="1.6" fill="#c4bba8"/><ellipse cx="301.7" cy="115.9" rx="1.1" ry="1.1" fill="#1d1815"/><rect x="311.6" y="118.5" width="3.1" height="2.9" fill="#737b83"/><ellipse cx="313.2" cy="118" rx="1.7" ry="1.6" fill="#e9e4d8"/><ellipse cx="313.2" cy="116.1" rx="1.1" ry="1.1" fill="#191412"/><rect x="314.3" y="113.6" width="2" height="1" fill="#efece4"/><rect x="322.8" y="118.6" width="3.1" height="2.9" fill="#737b83"/><ellipse cx="324.3" cy="118.1" rx="1.7" ry="1.6" fill="#e9e4d8"/><ellipse cx="324.3" cy="116.2" rx="1.1" ry="1.1" fill="#191412"/><rect x="331.5" y="118.7" width="3.1" height="2.9" fill="#596068"/><ellipse cx="333.1" cy="118.2" rx="1.7" ry="1.6" fill="#e0d9ca"/><ellipse cx="333.1" cy="116.3" rx="1.1" ry="1.1" fill="#2f2824"/><rect x="337.6" y="118.8" width="3.1" height="2.9" fill="#666e76"/><ellipse cx="339.2" cy="118.3" rx="1.7" ry="1.6" fill="#f2f0ea"/><ellipse cx="339.2" cy="116.4" rx="1.1" ry="1.1" fill="#2f2824"/><rect x="340.4" y="113.9" width="2" height="1" fill="#efece4"/><rect x="346.4" y="118.9" width="3.1" height="2.9" fill="#666e76"/><ellipse cx="347.9" cy="118.4" rx="1.7" ry="1.6" fill="#e9e4d8"/><ellipse cx="347.9" cy="116.5" rx="1.1" ry="1.1" fill="#1d1815"/><rect x="349.1" y="114" width="2" height="1" fill="#efece4"/><rect x="361.9" y="119.1" width="3.1" height="2.9" fill="#828a92"/><ellipse cx="363.5" cy="118.7" rx="1.7" ry="1.6" fill="#d2cec6"/><ellipse cx="363.5" cy="116.7" rx="1.1" ry="1.1" fill="#2f2824"/><rect x="364.7" y="114.2" width="2" height="1" fill="#efece4"/><rect x="1" y="117.9" width="3.9" height="3.6" fill="#666e76"/><ellipse cx="2.9" cy="117.3" rx="2.1" ry="1.9" fill="#f2f0ea"/><ellipse cx="2.9" cy="114.9" rx="1.3" ry="1.4" fill="#191412"/><rect x="10.9" y="118.4" width="3.9" height="3.6" fill="#828a92"/><ellipse cx="12.8" cy="117.8" rx="2.1" ry="1.9" fill="#2e3238"/><ellipse cx="12.8" cy="115.4" rx="1.3" ry="1.4" fill="#2f2824"/><rect x="14.3" y="112.4" width="2.4" height="1.2" fill="#efece4"/><rect x="17.9" y="118.7" width="3.9" height="3.6" fill="#666e76"/><ellipse cx="19.8" cy="118.1" rx="2.1" ry="1.9" fill="#e0d9ca"/><ellipse cx="19.8" cy="115.7" rx="1.3" ry="1.4" fill="#26201c"/><rect x="21.3" y="112.7" width="2.4" height="1.2" fill="#efece4"/><rect x="30.6" y="119.3" width="3.9" height="3.6" fill="#737b83"/><ellipse cx="32.6" cy="118.7" rx="2.1" ry="1.9" fill="#efece5"/><ellipse cx="32.6" cy="116.3" rx="1.3" ry="1.4" fill="#1d1815"/><rect x="42.2" y="119.8" width="3.9" height="3.6" fill="#737b83"/><ellipse cx="44.2" cy="119.2" rx="2.1" ry="1.9" fill="#e0d9ca"/><ellipse cx="44.2" cy="116.8" rx="1.3" ry="1.4" fill="#191412"/><rect x="45.6" y="113.7" width="2.4" height="1.2" fill="#efece4"/><rect x="52.4" y="120.2" width="3.9" height="3.6" fill="#828a92"/><ellipse cx="54.3" cy="119.6" rx="2.1" ry="1.9" fill="#e6e3dc"/><ellipse cx="54.3" cy="117.1" rx="1.3" ry="1.4" fill="#2f2824"/><rect x="55.8" y="114.1" width="2.4" height="1.2" fill="#efece4"/><rect x="61.8" y="120.5" width="3.9" height="3.6" fill="#828a92"/><ellipse cx="63.7" cy="119.9" rx="2.1" ry="1.9" fill="#9fb0c4"/><ellipse cx="63.7" cy="117.5" rx="1.3" ry="1.4" fill="#2f2824"/><rect x="69.1" y="120.7" width="3.9" height="3.6" fill="#596068"/><ellipse cx="71" cy="120.1" rx="2.1" ry="1.9" fill="#f2f0ea"/><ellipse cx="71" cy="117.7" rx="1.3" ry="1.4" fill="#26201c"/><rect x="78" y="121" width="3.9" height="3.6" fill="#666e76"/><ellipse cx="79.9" cy="120.4" rx="2.1" ry="1.9" fill="#9fb0c4"/><ellipse cx="79.9" cy="118" rx="1.3" ry="1.4" fill="#26201c"/><rect x="81.4" y="114.9" width="2.4" height="1.2" fill="#efece4"/><rect x="91.8" y="121.4" width="3.9" height="3.6" fill="#596068"/><ellipse cx="93.8" cy="120.8" rx="2.1" ry="1.9" fill="#efece5"/><ellipse cx="93.8" cy="118.3" rx="1.3" ry="1.4" fill="#1d1815"/><rect x="104.5" y="121.7" width="3.9" height="3.6" fill="#828a92"/><ellipse cx="106.4" cy="121.1" rx="2.1" ry="1.9" fill="#efece5"/><ellipse cx="106.4" cy="118.6" rx="1.3" ry="1.4" fill="#2f2824"/><rect x="107.8" y="115.6" width="2.4" height="1.2" fill="#efece4"/><rect x="112.5" y="121.8" width="3.9" height="3.6" fill="#666e76"/><ellipse cx="114.5" cy="121.2" rx="2.1" ry="1.9" fill="#efece5"/><ellipse cx="114.5" cy="118.8" rx="1.3" ry="1.4" fill="#1d1815"/><rect x="119.1" y="121.9" width="3.9" height="3.6" fill="#737b83"/><ellipse cx="121.1" cy="121.3" rx="2.1" ry="1.9" fill="#3e4650"/><ellipse cx="121.1" cy="118.9" rx="1.3" ry="1.4" fill="#2f2824"/><rect x="122.5" y="115.9" width="2.4" height="1.2" fill="#efece4"/><rect x="135.1" y="122.2" width="3.9" height="3.6" fill="#828a92"/><ellipse cx="137" cy="121.6" rx="2.1" ry="1.9" fill="#e0d9ca"/><ellipse cx="137" cy="119.2" rx="1.3" ry="1.4" fill="#26201c"/><rect x="138.5" y="116.1" width="2.4" height="1.2" fill="#efece4"/><rect x="142.1" y="122.3" width="3.9" height="3.6" fill="#596068"/><ellipse cx="144" cy="121.7" rx="2.1" ry="1.9" fill="#9fb0c4"/><ellipse cx="144" cy="119.2" rx="1.3" ry="1.4" fill="#26201c"/><rect x="152.1" y="122.4" width="3.9" height="3.6" fill="#828a92"/><ellipse cx="154.1" cy="121.7" rx="2.1" ry="1.9" fill="#8a8a86"/><ellipse cx="154.1" cy="119.3" rx="1.3" ry="1.4" fill="#26201c"/><rect x="160.6" y="122.4" width="3.9" height="3.6" fill="#596068"/><ellipse cx="162.5" cy="121.8" rx="2.1" ry="1.9" fill="#4a535e"/><ellipse cx="162.5" cy="119.4" rx="1.3" ry="1.4" fill="#2f2824"/><rect x="163.9" y="116.3" width="2.4" height="1.2" fill="#efece4"/><rect x="170.9" y="122.4" width="3.9" height="3.6" fill="#828a92"/><ellipse cx="172.8" cy="121.8" rx="2.1" ry="1.9" fill="#9fb0c4"/><ellipse cx="172.8" cy="119.4" rx="1.3" ry="1.4" fill="#26201c"/><rect x="182.1" y="122.5" width="3.9" height="3.6" fill="#828a92"/><ellipse cx="184" cy="121.8" rx="2.1" ry="1.9" fill="#e0d9ca"/><ellipse cx="184" cy="119.4" rx="1.3" ry="1.4" fill="#26201c"/><rect x="185.5" y="116.4" width="2.4" height="1.2" fill="#efece4"/><rect x="194.4" y="122.4" width="3.9" height="3.6" fill="#737b83"/><ellipse cx="196.4" cy="121.8" rx="2.1" ry="1.9" fill="#7f93aa"/><ellipse cx="196.4" cy="119.4" rx="1.3" ry="1.4" fill="#2f2824"/><rect x="197.8" y="116.4" width="2.4" height="1.2" fill="#efece4"/><rect x="203.1" y="122.4" width="3.9" height="3.6" fill="#596068"/><ellipse cx="205.1" cy="121.8" rx="2.1" ry="1.9" fill="#a39e96"/><ellipse cx="205.1" cy="119.3" rx="1.3" ry="1.4" fill="#191412"/><rect x="206.5" y="116.3" width="2.4" height="1.2" fill="#efece4"/><rect x="213.6" y="122.3" width="3.9" height="3.6" fill="#666e76"/><ellipse cx="215.5" cy="121.7" rx="2.1" ry="1.9" fill="#dcd8d0"/><ellipse cx="215.5" cy="119.2" rx="1.3" ry="1.4" fill="#1d1815"/><rect x="217" y="116.2" width="2.4" height="1.2" fill="#efece4"/><rect x="226.1" y="122.1" width="3.9" height="3.6" fill="#828a92"/><ellipse cx="228" cy="121.5" rx="2.1" ry="1.9" fill="#9fb0c4"/><ellipse cx="228" cy="119.1" rx="1.3" ry="1.4" fill="#26201c"/><rect x="238.8" y="121.9" width="3.9" height="3.6" fill="#737b83"/><ellipse cx="240.7" cy="121.3" rx="2.1" ry="1.9" fill="#e6e3dc"/><ellipse cx="240.7" cy="118.9" rx="1.3" ry="1.4" fill="#26201c"/><rect x="245.8" y="121.8" width="3.9" height="3.6" fill="#737b83"/><ellipse cx="247.8" cy="121.2" rx="2.1" ry="1.9" fill="#9fb0c4"/><ellipse cx="247.8" cy="118.8" rx="1.3" ry="1.4" fill="#2f2824"/><rect x="254.5" y="121.6" width="3.9" height="3.6" fill="#737b83"/><ellipse cx="256.4" cy="121" rx="2.1" ry="1.9" fill="#e6e3dc"/><ellipse cx="256.4" cy="118.6" rx="1.3" ry="1.4" fill="#26201c"/><rect x="262.6" y="121.4" width="3.9" height="3.6" fill="#596068"/><ellipse cx="264.6" cy="120.8" rx="2.1" ry="1.9" fill="#f2f0ea"/><ellipse cx="264.6" cy="118.4" rx="1.3" ry="1.4" fill="#191412"/><rect x="266" y="115.4" width="2.4" height="1.2" fill="#efece4"/><rect x="276.7" y="121.1" width="3.9" height="3.6" fill="#596068"/><ellipse cx="278.6" cy="120.5" rx="2.1" ry="1.9" fill="#d2cec6"/><ellipse cx="278.6" cy="118" rx="1.3" ry="1.4" fill="#191412"/><rect x="286.1" y="120.8" width="3.9" height="3.6" fill="#666e76"/><ellipse cx="288" cy="120.2" rx="2.1" ry="1.9" fill="#e6e3dc"/><ellipse cx="288" cy="117.8" rx="1.3" ry="1.4" fill="#1d1815"/><rect x="289.5" y="114.7" width="2.4" height="1.2" fill="#efece4"/><rect x="296.3" y="120.5" width="3.9" height="3.6" fill="#596068"/><ellipse cx="298.2" cy="119.9" rx="2.1" ry="1.9" fill="#9fb0c4"/><ellipse cx="298.2" cy="117.4" rx="1.3" ry="1.4" fill="#2f2824"/><rect x="299.7" y="114.4" width="2.4" height="1.2" fill="#efece4"/><rect x="305.8" y="120.1" width="3.9" height="3.6" fill="#828a92"/><ellipse cx="307.7" cy="119.5" rx="2.1" ry="1.9" fill="#c4bba8"/><ellipse cx="307.7" cy="117.1" rx="1.3" ry="1.4" fill="#1d1815"/><rect x="309.2" y="114.1" width="2.4" height="1.2" fill="#efece4"/><rect x="319.4" y="119.6" width="3.9" height="3.6" fill="#666e76"/><ellipse cx="321.4" cy="119" rx="2.1" ry="1.9" fill="#5a6470"/><ellipse cx="321.4" cy="116.6" rx="1.3" ry="1.4" fill="#2f2824"/><rect x="322.8" y="113.5" width="2.4" height="1.2" fill="#efece4"/><rect x="325.1" y="119.4" width="3.9" height="3.6" fill="#596068"/><ellipse cx="327.1" cy="118.8" rx="2.1" ry="1.9" fill="#6a7480"/><ellipse cx="327.1" cy="116.3" rx="1.3" ry="1.4" fill="#26201c"/><rect x="328.5" y="113.3" width="2.4" height="1.2" fill="#efece4"/><rect x="337.6" y="118.8" width="3.9" height="3.6" fill="#666e76"/><ellipse cx="339.5" cy="118.2" rx="2.1" ry="1.9" fill="#4a535e"/><ellipse cx="339.5" cy="115.8" rx="1.3" ry="1.4" fill="#2f2824"/><rect x="341" y="112.8" width="2.4" height="1.2" fill="#efece4"/><rect x="346.3" y="118.4" width="3.9" height="3.6" fill="#596068"/><ellipse cx="348.2" cy="117.8" rx="2.1" ry="1.9" fill="#4a535e"/><ellipse cx="348.2" cy="115.4" rx="1.3" ry="1.4" fill="#2f2824"/><rect x="349.6" y="112.4" width="2.4" height="1.2" fill="#efece4"/><rect x="362.1" y="117.6" width="3.9" height="3.6" fill="#737b83"/><ellipse cx="364" cy="117" rx="2.1" ry="1.9" fill="#efece5"/><ellipse cx="364" cy="114.6" rx="1.3" ry="1.4" fill="#2f2824"/><rect x="1.6" y="118.5" width="4.6" height="4.3" fill="#737b83"/><ellipse cx="3.9" cy="117.8" rx="2.5" ry="2.3" fill="#efece5"/><ellipse cx="3.9" cy="114.9" rx="1.6" ry="1.7" fill="#2f2824"/><rect x="5.6" y="111.3" width="2.9" height="1.4" fill="#efece4"/><rect x="10.1" y="119.4" width="4.6" height="4.3" fill="#828a92"/><ellipse cx="12.4" cy="118.7" rx="2.5" ry="2.3" fill="#e6e3dc"/><ellipse cx="12.4" cy="115.8" rx="1.6" ry="1.7" fill="#26201c"/><rect x="22.7" y="120.8" width="4.6" height="4.3" fill="#737b83"/><ellipse cx="25" cy="120.1" rx="2.5" ry="2.3" fill="#dcd8d0"/><ellipse cx="25" cy="117.2" rx="1.6" ry="1.7" fill="#1d1815"/><rect x="32.3" y="121.7" width="4.6" height="4.3" fill="#596068"/><ellipse cx="34.6" cy="121" rx="2.5" ry="2.3" fill="#e0d9ca"/><ellipse cx="34.6" cy="118.1" rx="1.6" ry="1.7" fill="#191412"/><rect x="36.4" y="114.5" width="2.9" height="1.4" fill="#efece4"/><rect x="40.8" y="122.5" width="4.6" height="4.3" fill="#596068"/><ellipse cx="43.2" cy="121.8" rx="2.5" ry="2.3" fill="#e6e3dc"/><ellipse cx="43.2" cy="118.9" rx="1.6" ry="1.7" fill="#1d1815"/><rect x="44.9" y="115.3" width="2.9" height="1.4" fill="#efece4"/><rect x="53.4" y="123.6" width="4.6" height="4.3" fill="#596068"/><ellipse cx="55.7" cy="122.9" rx="2.5" ry="2.3" fill="#c4bba8"/><ellipse cx="55.7" cy="120" rx="1.6" ry="1.7" fill="#26201c"/><rect x="57.5" y="116.4" width="2.9" height="1.4" fill="#efece4"/><rect x="61.8" y="124.3" width="4.6" height="4.3" fill="#596068"/><ellipse cx="64.1" cy="123.5" rx="2.5" ry="2.3" fill="#f2f0ea"/><ellipse cx="64.1" cy="120.6" rx="1.6" ry="1.7" fill="#191412"/><rect x="65.8" y="117" width="2.9" height="1.4" fill="#efece4"/><rect x="78.1" y="125.4" width="4.6" height="4.3" fill="#666e76"/><ellipse cx="80.4" cy="124.7" rx="2.5" ry="2.3" fill="#e0d9ca"/><ellipse cx="80.4" cy="121.8" rx="1.6" ry="1.7" fill="#1d1815"/><rect x="82.1" y="118.2" width="2.9" height="1.4" fill="#efece4"/><rect x="88.7" y="126.1" width="4.6" height="4.3" fill="#737b83"/><ellipse cx="91" cy="125.4" rx="2.5" ry="2.3" fill="#efece5"/><ellipse cx="91" cy="122.5" rx="1.6" ry="1.7" fill="#1d1815"/><rect x="92.7" y="118.9" width="2.9" height="1.4" fill="#efece4"/><rect x="100.1" y="126.7" width="4.6" height="4.3" fill="#828a92"/><ellipse cx="102.4" cy="126" rx="2.5" ry="2.3" fill="#7f93aa"/><ellipse cx="102.4" cy="123.1" rx="1.6" ry="1.7" fill="#2f2824"/><rect x="104.2" y="119.5" width="2.9" height="1.4" fill="#efece4"/><rect x="106.1" y="127" width="4.6" height="4.3" fill="#666e76"/><ellipse cx="108.4" cy="126.3" rx="2.5" ry="2.3" fill="#7f93aa"/><ellipse cx="108.4" cy="123.4" rx="1.6" ry="1.7" fill="#191412"/><rect x="110.2" y="119.8" width="2.9" height="1.4" fill="#efece4"/><rect x="121.7" y="127.7" width="4.6" height="4.3" fill="#596068"/><ellipse cx="124" cy="126.9" rx="2.5" ry="2.3" fill="#4a535e"/><ellipse cx="124" cy="124" rx="1.6" ry="1.7" fill="#191412"/><rect x="125.8" y="127.8" width="4.6" height="4.3" fill="#666e76"/><ellipse cx="128.1" cy="127.1" rx="2.5" ry="2.3" fill="#e6e3dc"/><ellipse cx="128.1" cy="124.2" rx="1.6" ry="1.7" fill="#1d1815"/><rect x="137.5" y="128.2" width="4.6" height="4.3" fill="#828a92"/><ellipse cx="139.9" cy="127.4" rx="2.5" ry="2.3" fill="#c4bba8"/><ellipse cx="139.9" cy="124.6" rx="1.6" ry="1.7" fill="#26201c"/><rect x="141.6" y="120.9" width="2.9" height="1.4" fill="#efece4"/><rect x="148.5" y="128.4" width="4.6" height="4.3" fill="#737b83"/><ellipse cx="150.8" cy="127.7" rx="2.5" ry="2.3" fill="#e0d9ca"/><ellipse cx="150.8" cy="124.8" rx="1.6" ry="1.7" fill="#191412"/><rect x="152.5" y="121.2" width="2.9" height="1.4" fill="#efece4"/><rect x="163" y="128.6" width="4.6" height="4.3" fill="#596068"/><ellipse cx="165.3" cy="127.9" rx="2.5" ry="2.3" fill="#c4bba8"/><ellipse cx="165.3" cy="125" rx="1.6" ry="1.7" fill="#26201c"/><rect x="167" y="121.4" width="2.9" height="1.4" fill="#efece4"/><rect x="175.1" y="128.7" width="4.6" height="4.3" fill="#666e76"/><ellipse cx="177.5" cy="128" rx="2.5" ry="2.3" fill="#9fb0c4"/><ellipse cx="177.5" cy="125.1" rx="1.6" ry="1.7" fill="#26201c"/><rect x="179.2" y="121.5" width="2.9" height="1.4" fill="#efece4"/><rect x="180.8" y="128.7" width="4.6" height="4.3" fill="#666e76"/><ellipse cx="183.1" cy="128" rx="2.5" ry="2.3" fill="#e0d9ca"/><ellipse cx="183.1" cy="125.1" rx="1.6" ry="1.7" fill="#1d1815"/><rect x="184.8" y="121.5" width="2.9" height="1.4" fill="#efece4"/><rect x="192.7" y="128.6" width="4.6" height="4.3" fill="#666e76"/><ellipse cx="195" cy="127.9" rx="2.5" ry="2.3" fill="#c4bba8"/><ellipse cx="195" cy="125" rx="1.6" ry="1.7" fill="#2f2824"/><rect x="196.8" y="121.4" width="2.9" height="1.4" fill="#efece4"/><rect x="202.2" y="128.5" width="4.6" height="4.3" fill="#596068"/><ellipse cx="204.5" cy="127.8" rx="2.5" ry="2.3" fill="#6a7480"/><ellipse cx="204.5" cy="124.9" rx="1.6" ry="1.7" fill="#2f2824"/><rect x="206.2" y="121.3" width="2.9" height="1.4" fill="#efece4"/><rect x="213.1" y="128.3" width="4.6" height="4.3" fill="#828a92"/><ellipse cx="215.4" cy="127.6" rx="2.5" ry="2.3" fill="#6a7480"/><ellipse cx="215.4" cy="124.7" rx="1.6" ry="1.7" fill="#191412"/><rect x="217.2" y="121.1" width="2.9" height="1.4" fill="#efece4"/><rect x="227.3" y="127.9" width="4.6" height="4.3" fill="#666e76"/><ellipse cx="229.7" cy="127.2" rx="2.5" ry="2.3" fill="#c4bba8"/><ellipse cx="229.7" cy="124.3" rx="1.6" ry="1.7" fill="#191412"/><rect x="231.4" y="120.7" width="2.9" height="1.4" fill="#efece4"/><rect x="235.3" y="127.6" width="4.6" height="4.3" fill="#596068"/><ellipse cx="237.6" cy="126.9" rx="2.5" ry="2.3" fill="#3e4650"/><ellipse cx="237.6" cy="124" rx="1.6" ry="1.7" fill="#1d1815"/><rect x="239.3" y="120.4" width="2.9" height="1.4" fill="#efece4"/><rect x="248.9" y="127.1" width="4.6" height="4.3" fill="#596068"/><ellipse cx="251.3" cy="126.3" rx="2.5" ry="2.3" fill="#8a8a86"/><ellipse cx="251.3" cy="123.5" rx="1.6" ry="1.7" fill="#26201c"/><rect x="259" y="126.6" width="4.6" height="4.3" fill="#828a92"/><ellipse cx="261.3" cy="125.8" rx="2.5" ry="2.3" fill="#e0d9ca"/><ellipse cx="261.3" cy="123" rx="1.6" ry="1.7" fill="#2f2824"/><rect x="267.2" y="126.1" width="4.6" height="4.3" fill="#828a92"/><ellipse cx="269.5" cy="125.4" rx="2.5" ry="2.3" fill="#e6e3dc"/><ellipse cx="269.5" cy="122.5" rx="1.6" ry="1.7" fill="#191412"/><rect x="271.3" y="118.9" width="2.9" height="1.4" fill="#efece4"/><rect x="284.9" y="125" width="4.6" height="4.3" fill="#828a92"/><ellipse cx="287.2" cy="124.3" rx="2.5" ry="2.3" fill="#8a8a86"/><ellipse cx="287.2" cy="121.4" rx="1.6" ry="1.7" fill="#2f2824"/><rect x="288.9" y="117.7" width="2.9" height="1.4" fill="#efece4"/><rect x="295.7" y="124.2" width="4.6" height="4.3" fill="#596068"/><ellipse cx="298" cy="123.5" rx="2.5" ry="2.3" fill="#d2cec6"/><ellipse cx="298" cy="120.6" rx="1.6" ry="1.7" fill="#1d1815"/><rect x="300.5" y="123.8" width="4.6" height="4.3" fill="#828a92"/><ellipse cx="302.8" cy="123.1" rx="2.5" ry="2.3" fill="#c4bba8"/><ellipse cx="302.8" cy="120.2" rx="1.6" ry="1.7" fill="#1d1815"/><rect x="317" y="122.4" width="4.6" height="4.3" fill="#737b83"/><ellipse cx="319.3" cy="121.7" rx="2.5" ry="2.3" fill="#efece5"/><ellipse cx="319.3" cy="118.8" rx="1.6" ry="1.7" fill="#191412"/><rect x="321" y="115.2" width="2.9" height="1.4" fill="#efece4"/><rect x="325.2" y="121.6" width="4.6" height="4.3" fill="#737b83"/><ellipse cx="327.5" cy="120.9" rx="2.5" ry="2.3" fill="#e6e3dc"/><ellipse cx="327.5" cy="118" rx="1.6" ry="1.7" fill="#26201c"/><rect x="335.6" y="120.6" width="4.6" height="4.3" fill="#737b83"/><ellipse cx="337.9" cy="119.9" rx="2.5" ry="2.3" fill="#dcd8d0"/><ellipse cx="337.9" cy="117" rx="1.6" ry="1.7" fill="#1d1815"/><rect x="339.7" y="113.4" width="2.9" height="1.4" fill="#efece4"/><rect x="347" y="119.4" width="4.6" height="4.3" fill="#596068"/><ellipse cx="349.3" cy="118.6" rx="2.5" ry="2.3" fill="#f2f0ea"/><ellipse cx="349.3" cy="115.7" rx="1.6" ry="1.7" fill="#26201c"/><rect x="351.1" y="112.1" width="2.9" height="1.4" fill="#efece4"/><rect x="355.5" y="118.4" width="4.6" height="4.3" fill="#666e76"/><ellipse cx="357.8" cy="117.7" rx="2.5" ry="2.3" fill="#d2cec6"/><ellipse cx="357.8" cy="114.8" rx="1.6" ry="1.7" fill="#1d1815"/><rect x="-0.1" y="119.9" width="5.4" height="5" fill="#737b83"/><ellipse cx="2.6" cy="119.1" rx="2.9" ry="2.7" fill="#9fb0c4"/><ellipse cx="2.6" cy="115.7" rx="1.8" ry="1.9" fill="#191412"/><rect x="4.6" y="111.5" width="3.4" height="1.7" fill="#efece4"/><rect x="7.4" y="121.2" width="5.4" height="5" fill="#737b83"/><ellipse cx="10.1" cy="120.4" rx="2.9" ry="2.7" fill="#c4bba8"/><ellipse cx="10.1" cy="117" rx="1.8" ry="1.9" fill="#1d1815"/><rect x="12.1" y="112.8" width="3.4" height="1.7" fill="#efece4"/><rect x="22.5" y="123.8" width="5.4" height="5" fill="#828a92"/><ellipse cx="25.2" cy="122.9" rx="2.9" ry="2.7" fill="#d2cec6"/><ellipse cx="25.2" cy="119.6" rx="1.8" ry="1.9" fill="#1d1815"/><rect x="34.7" y="125.6" width="5.4" height="5" fill="#737b83"/><ellipse cx="37.4" cy="124.8" rx="2.9" ry="2.7" fill="#a39e96"/><ellipse cx="37.4" cy="121.4" rx="1.8" ry="1.9" fill="#26201c"/><rect x="39.4" y="117.2" width="3.4" height="1.7" fill="#efece4"/><rect x="44.6" y="127" width="5.4" height="5" fill="#596068"/><ellipse cx="47.3" cy="126.2" rx="2.9" ry="2.7" fill="#f2f0ea"/><ellipse cx="47.3" cy="122.8" rx="1.8" ry="1.9" fill="#26201c"/><rect x="49.3" y="118.6" width="3.4" height="1.7" fill="#efece4"/><rect x="62.2" y="129.3" width="5.4" height="5" fill="#596068"/><ellipse cx="64.9" cy="128.4" rx="2.9" ry="2.7" fill="#efece5"/><ellipse cx="64.9" cy="125.1" rx="1.8" ry="1.9" fill="#1d1815"/><rect x="66.9" y="120.9" width="3.4" height="1.7" fill="#efece4"/><rect x="73.4" y="130.5" width="5.4" height="5" fill="#666e76"/><ellipse cx="76.1" cy="129.7" rx="2.9" ry="2.7" fill="#dcd8d0"/><ellipse cx="76.1" cy="126.3" rx="1.8" ry="1.9" fill="#26201c"/><rect x="82.3" y="131.4" width="5.4" height="5" fill="#737b83"/><ellipse cx="85" cy="130.6" rx="2.9" ry="2.7" fill="#d2cec6"/><ellipse cx="85" cy="127.2" rx="1.8" ry="1.9" fill="#191412"/><rect x="87" y="123" width="3.4" height="1.7" fill="#efece4"/><rect x="96.5" y="132.7" width="5.4" height="5" fill="#828a92"/><ellipse cx="99.2" cy="131.9" rx="2.9" ry="2.7" fill="#8a8a86"/><ellipse cx="99.2" cy="128.5" rx="1.8" ry="1.9" fill="#26201c"/><rect x="102.1" y="133.2" width="5.4" height="5" fill="#596068"/><ellipse cx="104.7" cy="132.3" rx="2.9" ry="2.7" fill="#3e4650"/><ellipse cx="104.7" cy="129" rx="1.8" ry="1.9" fill="#1d1815"/><rect x="106.8" y="124.8" width="3.4" height="1.7" fill="#efece4"/><rect x="114.4" y="134" width="5.4" height="5" fill="#828a92"/><ellipse cx="117.1" cy="133.2" rx="2.9" ry="2.7" fill="#4a535e"/><ellipse cx="117.1" cy="129.9" rx="1.8" ry="1.9" fill="#191412"/><rect x="127.5" y="134.8" width="5.4" height="5" fill="#737b83"/><ellipse cx="130.1" cy="134" rx="2.9" ry="2.7" fill="#dcd8d0"/><ellipse cx="130.1" cy="130.6" rx="1.8" ry="1.9" fill="#26201c"/><rect x="132.2" y="126.4" width="3.4" height="1.7" fill="#efece4"/><rect x="140.2" y="135.4" width="5.4" height="5" fill="#828a92"/><ellipse cx="142.9" cy="134.5" rx="2.9" ry="2.7" fill="#9fb0c4"/><ellipse cx="142.9" cy="131.2" rx="1.8" ry="1.9" fill="#26201c"/><rect x="144.9" y="127" width="3.4" height="1.7" fill="#efece4"/><rect x="156.3" y="135.9" width="5.4" height="5" fill="#596068"/><ellipse cx="159" cy="135" rx="2.9" ry="2.7" fill="#e9e4d8"/><ellipse cx="159" cy="131.7" rx="1.8" ry="1.9" fill="#2f2824"/><rect x="161" y="127.5" width="3.4" height="1.7" fill="#efece4"/><rect x="164.3" y="136" width="5.4" height="5" fill="#828a92"/><ellipse cx="167" cy="135.2" rx="2.9" ry="2.7" fill="#efece5"/><ellipse cx="167" cy="131.8" rx="1.8" ry="1.9" fill="#191412"/><rect x="169" y="127.6" width="3.4" height="1.7" fill="#efece4"/><rect x="175.5" y="136.1" width="5.4" height="5" fill="#828a92"/><ellipse cx="178.2" cy="135.3" rx="2.9" ry="2.7" fill="#6a7480"/><ellipse cx="178.2" cy="131.9" rx="1.8" ry="1.9" fill="#1d1815"/><rect x="180.2" y="127.7" width="3.4" height="1.7" fill="#efece4"/><rect x="193.6" y="136" width="5.4" height="5" fill="#737b83"/><ellipse cx="196.2" cy="135.1" rx="2.9" ry="2.7" fill="#dcd8d0"/><ellipse cx="196.2" cy="131.8" rx="1.8" ry="1.9" fill="#191412"/><rect x="198.3" y="127.6" width="3.4" height="1.7" fill="#efece4"/><rect x="202.5" y="135.8" width="5.4" height="5" fill="#828a92"/><ellipse cx="205.2" cy="135" rx="2.9" ry="2.7" fill="#6a7480"/><ellipse cx="205.2" cy="131.6" rx="1.8" ry="1.9" fill="#26201c"/><rect x="215.3" y="135.4" width="5.4" height="5" fill="#828a92"/><ellipse cx="218" cy="134.5" rx="2.9" ry="2.7" fill="#f2f0ea"/><ellipse cx="218" cy="131.2" rx="1.8" ry="1.9" fill="#1d1815"/><rect x="220" y="127" width="3.4" height="1.7" fill="#efece4"/><rect x="222.5" y="135.1" width="5.4" height="5" fill="#737b83"/><ellipse cx="225.2" cy="134.2" rx="2.9" ry="2.7" fill="#c4bba8"/><ellipse cx="225.2" cy="130.9" rx="1.8" ry="1.9" fill="#1d1815"/><rect x="227.2" y="126.7" width="3.4" height="1.7" fill="#efece4"/><rect x="238.4" y="134.2" width="5.4" height="5" fill="#596068"/><ellipse cx="241.1" cy="133.4" rx="2.9" ry="2.7" fill="#e9e4d8"/><ellipse cx="241.1" cy="130" rx="1.8" ry="1.9" fill="#2f2824"/><rect x="243.1" y="125.8" width="3.4" height="1.7" fill="#efece4"/><rect x="250.2" y="133.4" width="5.4" height="5" fill="#828a92"/><ellipse cx="252.9" cy="132.6" rx="2.9" ry="2.7" fill="#8a8a86"/><ellipse cx="252.9" cy="129.2" rx="1.8" ry="1.9" fill="#26201c"/><rect x="254.9" y="125" width="3.4" height="1.7" fill="#efece4"/><rect x="260.1" y="132.6" width="5.4" height="5" fill="#737b83"/><ellipse cx="262.7" cy="131.8" rx="2.9" ry="2.7" fill="#9fb0c4"/><ellipse cx="262.7" cy="128.4" rx="1.8" ry="1.9" fill="#2f2824"/><rect x="273.5" y="131.4" width="5.4" height="5" fill="#828a92"/><ellipse cx="276.2" cy="130.6" rx="2.9" ry="2.7" fill="#d2cec6"/><ellipse cx="276.2" cy="127.2" rx="1.8" ry="1.9" fill="#26201c"/><rect x="281.5" y="130.6" width="5.4" height="5" fill="#596068"/><ellipse cx="284.2" cy="129.8" rx="2.9" ry="2.7" fill="#f2f0ea"/><ellipse cx="284.2" cy="126.4" rx="1.8" ry="1.9" fill="#1d1815"/><rect x="286.2" y="122.2" width="3.4" height="1.7" fill="#efece4"/><rect x="299" y="128.6" width="5.4" height="5" fill="#737b83"/><ellipse cx="301.7" cy="127.7" rx="2.9" ry="2.7" fill="#d2cec6"/><ellipse cx="301.7" cy="124.4" rx="1.8" ry="1.9" fill="#26201c"/><rect x="303.7" y="120.2" width="3.4" height="1.7" fill="#efece4"/><rect x="311.6" y="126.9" width="5.4" height="5" fill="#737b83"/><ellipse cx="314.3" cy="126.1" rx="2.9" ry="2.7" fill="#e0d9ca"/><ellipse cx="314.3" cy="122.7" rx="1.8" ry="1.9" fill="#191412"/><rect x="316.3" y="118.6" width="3.4" height="1.7" fill="#efece4"/><rect x="324.8" y="125" width="5.4" height="5" fill="#737b83"/><ellipse cx="327.4" cy="124.2" rx="2.9" ry="2.7" fill="#d2cec6"/><ellipse cx="327.4" cy="120.9" rx="1.8" ry="1.9" fill="#2f2824"/><rect x="332.5" y="123.8" width="5.4" height="5" fill="#666e76"/><ellipse cx="335.2" cy="123" rx="2.9" ry="2.7" fill="#dcd8d0"/><ellipse cx="335.2" cy="119.7" rx="1.8" ry="1.9" fill="#1d1815"/><rect x="337.2" y="115.5" width="3.4" height="1.7" fill="#efece4"/><rect x="343.9" y="122" width="5.4" height="5" fill="#828a92"/><ellipse cx="346.6" cy="121.1" rx="2.9" ry="2.7" fill="#4a535e"/><ellipse cx="346.6" cy="117.8" rx="1.8" ry="1.9" fill="#26201c"/><rect x="348.6" y="113.6" width="3.4" height="1.7" fill="#efece4"/><rect x="353.4" y="120.3" width="5.4" height="5" fill="#596068"/><ellipse cx="356.1" cy="119.5" rx="2.9" ry="2.7" fill="#e9e4d8"/><ellipse cx="356.1" cy="116.1" rx="1.8" ry="1.9" fill="#26201c"/><rect x="358.1" y="111.9" width="3.4" height="1.7" fill="#efece4"/><rect x="0" y="122.5" width="6.1" height="5.7" fill="#666e76"/><ellipse cx="3.1" cy="121.6" rx="3.2" ry="3.1" fill="#e0d9ca"/><ellipse cx="3.1" cy="117.7" rx="2.1" ry="2.2" fill="#1d1815"/><rect x="9.6" y="124.8" width="6.1" height="5.7" fill="#596068"/><ellipse cx="12.6" cy="123.9" rx="3.2" ry="3.1" fill="#5a6470"/><ellipse cx="12.6" cy="120" rx="2.1" ry="2.2" fill="#2f2824"/><rect x="24.1" y="128.1" width="6.1" height="5.7" fill="#666e76"/><ellipse cx="27.2" cy="127.1" rx="3.2" ry="3.1" fill="#e0d9ca"/><ellipse cx="27.2" cy="123.3" rx="2.1" ry="2.2" fill="#2f2824"/><rect x="29.5" y="118.5" width="3.8" height="1.9" fill="#efece4"/><rect x="41" y="131.5" width="6.1" height="5.7" fill="#828a92"/><ellipse cx="44.1" cy="130.5" rx="3.2" ry="3.1" fill="#2e3238"/><ellipse cx="44.1" cy="126.7" rx="2.1" ry="2.2" fill="#26201c"/><rect x="46.4" y="121.9" width="3.8" height="1.9" fill="#efece4"/><rect x="48.7" y="132.9" width="6.1" height="5.7" fill="#596068"/><ellipse cx="51.8" cy="131.9" rx="3.2" ry="3.1" fill="#4a535e"/><ellipse cx="51.8" cy="128.1" rx="2.1" ry="2.2" fill="#2f2824"/><rect x="54.1" y="123.3" width="3.8" height="1.9" fill="#efece4"/><rect x="59.7" y="134.8" width="6.1" height="5.7" fill="#596068"/><ellipse cx="62.8" cy="133.8" rx="3.2" ry="3.1" fill="#d2cec6"/><ellipse cx="62.8" cy="130" rx="2.1" ry="2.2" fill="#26201c"/><rect x="74.7" y="137.1" width="6.1" height="5.7" fill="#737b83"/><ellipse cx="77.8" cy="136.1" rx="3.2" ry="3.1" fill="#f2f0ea"/><ellipse cx="77.8" cy="132.3" rx="2.1" ry="2.2" fill="#26201c"/><rect x="87.9" y="138.9" width="6.1" height="5.7" fill="#596068"/><ellipse cx="91" cy="137.9" rx="3.2" ry="3.1" fill="#6a7480"/><ellipse cx="91" cy="134.1" rx="2.1" ry="2.2" fill="#26201c"/><rect x="93.2" y="129.3" width="3.8" height="1.9" fill="#efece4"/><rect x="97.6" y="140" width="6.1" height="5.7" fill="#737b83"/><ellipse cx="100.6" cy="139" rx="3.2" ry="3.1" fill="#c4bba8"/><ellipse cx="100.6" cy="135.2" rx="2.1" ry="2.2" fill="#2f2824"/><rect x="102.9" y="130.4" width="3.8" height="1.9" fill="#efece4"/><rect x="110.4" y="141.3" width="6.1" height="5.7" fill="#737b83"/><ellipse cx="113.5" cy="140.4" rx="3.2" ry="3.1" fill="#dcd8d0"/><ellipse cx="113.5" cy="136.5" rx="2.1" ry="2.2" fill="#2f2824"/><rect x="115.7" y="131.8" width="3.8" height="1.9" fill="#efece4"/><rect x="123.5" y="142.4" width="6.1" height="5.7" fill="#828a92"/><ellipse cx="126.6" cy="141.5" rx="3.2" ry="3.1" fill="#6a7480"/><ellipse cx="126.6" cy="137.6" rx="2.1" ry="2.2" fill="#2f2824"/><rect x="128.8" y="132.9" width="3.8" height="1.9" fill="#efece4"/><rect x="141.6" y="143.5" width="6.1" height="5.7" fill="#666e76"/><ellipse cx="144.7" cy="142.6" rx="3.2" ry="3.1" fill="#9fb0c4"/><ellipse cx="144.7" cy="138.8" rx="2.1" ry="2.2" fill="#1d1815"/><rect x="147" y="134" width="3.8" height="1.9" fill="#efece4"/><rect x="148.9" y="143.9" width="6.1" height="5.7" fill="#828a92"/><ellipse cx="152" cy="142.9" rx="3.2" ry="3.1" fill="#9fb0c4"/><ellipse cx="152" cy="139.1" rx="2.1" ry="2.2" fill="#2f2824"/><rect x="162.5" y="144.3" width="6.1" height="5.7" fill="#828a92"/><ellipse cx="165.6" cy="143.3" rx="3.2" ry="3.1" fill="#7f93aa"/><ellipse cx="165.6" cy="139.5" rx="2.1" ry="2.2" fill="#2f2824"/><rect x="174.3" y="144.4" width="6.1" height="5.7" fill="#737b83"/><ellipse cx="177.4" cy="143.5" rx="3.2" ry="3.1" fill="#dcd8d0"/><ellipse cx="177.4" cy="139.7" rx="2.1" ry="2.2" fill="#26201c"/><rect x="192.3" y="144.3" width="6.1" height="5.7" fill="#737b83"/><ellipse cx="195.4" cy="143.3" rx="3.2" ry="3.1" fill="#9fb0c4"/><ellipse cx="195.4" cy="139.5" rx="2.1" ry="2.2" fill="#2f2824"/><rect x="197.7" y="134.7" width="3.8" height="1.9" fill="#efece4"/><rect x="205.5" y="143.9" width="6.1" height="5.7" fill="#596068"/><ellipse cx="208.6" cy="142.9" rx="3.2" ry="3.1" fill="#dcd8d0"/><ellipse cx="208.6" cy="139.1" rx="2.1" ry="2.2" fill="#26201c"/><rect x="210.9" y="134.3" width="3.8" height="1.9" fill="#efece4"/><rect x="214.7" y="143.5" width="6.1" height="5.7" fill="#828a92"/><ellipse cx="217.7" cy="142.5" rx="3.2" ry="3.1" fill="#dcd8d0"/><ellipse cx="217.7" cy="138.7" rx="2.1" ry="2.2" fill="#2f2824"/><rect x="224.8" y="142.9" width="6.1" height="5.7" fill="#737b83"/><ellipse cx="227.9" cy="141.9" rx="3.2" ry="3.1" fill="#d2cec6"/><ellipse cx="227.9" cy="138.1" rx="2.1" ry="2.2" fill="#2f2824"/><rect x="230.2" y="133.3" width="3.8" height="1.9" fill="#efece4"/><rect x="242" y="141.5" width="6.1" height="5.7" fill="#828a92"/><ellipse cx="245.1" cy="140.6" rx="3.2" ry="3.1" fill="#6a7480"/><ellipse cx="245.1" cy="136.8" rx="2.1" ry="2.2" fill="#2f2824"/><rect x="250.3" y="140.7" width="6.1" height="5.7" fill="#737b83"/><ellipse cx="253.3" cy="139.8" rx="3.2" ry="3.1" fill="#d2cec6"/><ellipse cx="253.3" cy="136" rx="2.1" ry="2.2" fill="#26201c"/><rect x="255.6" y="131.2" width="3.8" height="1.9" fill="#efece4"/><rect x="263.8" y="139.2" width="6.1" height="5.7" fill="#596068"/><ellipse cx="266.9" cy="138.3" rx="3.2" ry="3.1" fill="#dcd8d0"/><ellipse cx="266.9" cy="134.5" rx="2.1" ry="2.2" fill="#1d1815"/><rect x="277" y="137.5" width="6.1" height="5.7" fill="#666e76"/><ellipse cx="280" cy="136.6" rx="3.2" ry="3.1" fill="#c4bba8"/><ellipse cx="280" cy="132.8" rx="2.1" ry="2.2" fill="#191412"/><rect x="289" y="135.8" width="6.1" height="5.7" fill="#596068"/><ellipse cx="292.1" cy="134.8" rx="3.2" ry="3.1" fill="#a39e96"/><ellipse cx="292.1" cy="131" rx="2.1" ry="2.2" fill="#1d1815"/><rect x="294.4" y="126.2" width="3.8" height="1.9" fill="#efece4"/><rect x="309.3" y="132.3" width="6.1" height="5.7" fill="#828a92"/><ellipse cx="312.4" cy="131.4" rx="3.2" ry="3.1" fill="#d2cec6"/><ellipse cx="312.4" cy="127.6" rx="2.1" ry="2.2" fill="#26201c"/><rect x="314.7" y="122.8" width="3.8" height="1.9" fill="#efece4"/><rect x="315.7" y="131.1" width="6.1" height="5.7" fill="#596068"/><ellipse cx="318.7" cy="130.2" rx="3.2" ry="3.1" fill="#5a6470"/><ellipse cx="318.7" cy="126.4" rx="2.1" ry="2.2" fill="#26201c"/><rect x="326.7" y="128.9" width="6.1" height="5.7" fill="#737b83"/><ellipse cx="329.7" cy="128" rx="3.2" ry="3.1" fill="#c4bba8"/><ellipse cx="329.7" cy="124.2" rx="2.1" ry="2.2" fill="#26201c"/><rect x="340.7" y="125.9" width="6.1" height="5.7" fill="#828a92"/><ellipse cx="343.7" cy="124.9" rx="3.2" ry="3.1" fill="#d2cec6"/><ellipse cx="343.7" cy="121.1" rx="2.1" ry="2.2" fill="#1d1815"/><rect x="360.6" y="121.1" width="6.1" height="5.7" fill="#666e76"/><ellipse cx="363.7" cy="120.1" rx="3.2" ry="3.1" fill="#7f93aa"/><ellipse cx="363.7" cy="116.3" rx="2.1" ry="2.2" fill="#26201c"/><rect x="-1.4" y="125.5" width="6.9" height="6.4" fill="#828a92"/><ellipse cx="2.1" cy="124.5" rx="3.6" ry="3.4" fill="#d2cec6"/><ellipse cx="2.1" cy="120.2" rx="2.4" ry="2.5" fill="#1d1815"/><rect x="4.6" y="114.8" width="4.3" height="2.1" fill="#efece4"/><rect x="15" y="130.5" width="6.9" height="6.4" fill="#828a92"/><ellipse cx="18.4" cy="129.4" rx="3.6" ry="3.4" fill="#f2f0ea"/><ellipse cx="18.4" cy="125.1" rx="2.4" ry="2.5" fill="#191412"/><rect x="21" y="119.7" width="4.3" height="2.1" fill="#efece4"/><rect x="24.4" y="133.1" width="6.9" height="6.4" fill="#737b83"/><ellipse cx="27.9" cy="132" rx="3.6" ry="3.4" fill="#a39e96"/><ellipse cx="27.9" cy="127.7" rx="2.4" ry="2.5" fill="#2f2824"/><rect x="39.9" y="137" width="6.9" height="6.4" fill="#666e76"/><ellipse cx="43.3" cy="135.9" rx="3.6" ry="3.4" fill="#6a7480"/><ellipse cx="43.3" cy="131.7" rx="2.4" ry="2.5" fill="#191412"/><rect x="52.6" y="139.9" width="6.9" height="6.4" fill="#596068"/><ellipse cx="56" cy="138.9" rx="3.6" ry="3.4" fill="#a39e96"/><ellipse cx="56" cy="134.6" rx="2.4" ry="2.5" fill="#2f2824"/><rect x="69.9" y="143.5" width="6.9" height="6.4" fill="#828a92"/><ellipse cx="73.3" cy="142.4" rx="3.6" ry="3.4" fill="#a39e96"/><ellipse cx="73.3" cy="138.1" rx="2.4" ry="2.5" fill="#2f2824"/><rect x="76.3" y="144.6" width="6.9" height="6.4" fill="#828a92"/><ellipse cx="79.7" cy="143.6" rx="3.6" ry="3.4" fill="#4a535e"/><ellipse cx="79.7" cy="139.3" rx="2.4" ry="2.5" fill="#2f2824"/><rect x="91.8" y="147.2" width="6.9" height="6.4" fill="#737b83"/><ellipse cx="95.2" cy="146.1" rx="3.6" ry="3.4" fill="#a39e96"/><ellipse cx="95.2" cy="141.8" rx="2.4" ry="2.5" fill="#1d1815"/><rect x="108.4" y="149.4" width="6.9" height="6.4" fill="#666e76"/><ellipse cx="111.8" cy="148.4" rx="3.6" ry="3.4" fill="#e6e3dc"/><ellipse cx="111.8" cy="144.1" rx="2.4" ry="2.5" fill="#191412"/><rect x="114.4" y="138.7" width="4.3" height="2.1" fill="#efece4"/><rect x="120.7" y="150.8" width="6.9" height="6.4" fill="#596068"/><ellipse cx="124.2" cy="149.7" rx="3.6" ry="3.4" fill="#e9e4d8"/><ellipse cx="124.2" cy="145.4" rx="2.4" ry="2.5" fill="#26201c"/><rect x="138.6" y="152.3" width="6.9" height="6.4" fill="#828a92"/><ellipse cx="142" cy="151.2" rx="3.6" ry="3.4" fill="#a39e96"/><ellipse cx="142" cy="146.9" rx="2.4" ry="2.5" fill="#191412"/><rect x="153.9" y="153.1" width="6.9" height="6.4" fill="#596068"/><ellipse cx="157.3" cy="152" rx="3.6" ry="3.4" fill="#7f93aa"/><ellipse cx="157.3" cy="147.7" rx="2.4" ry="2.5" fill="#1d1815"/><rect x="159.9" y="142.4" width="4.3" height="2.1" fill="#efece4"/><rect x="167.7" y="153.5" width="6.9" height="6.4" fill="#737b83"/><ellipse cx="171.1" cy="152.4" rx="3.6" ry="3.4" fill="#5a6470"/><ellipse cx="171.1" cy="148.1" rx="2.4" ry="2.5" fill="#26201c"/><rect x="173.7" y="142.8" width="4.3" height="2.1" fill="#efece4"/><rect x="180.7" y="153.6" width="6.9" height="6.4" fill="#666e76"/><ellipse cx="184.1" cy="152.5" rx="3.6" ry="3.4" fill="#c4bba8"/><ellipse cx="184.1" cy="148.2" rx="2.4" ry="2.5" fill="#2f2824"/><rect x="187.4" y="153.5" width="6.9" height="6.4" fill="#666e76"/><ellipse cx="190.8" cy="152.4" rx="3.6" ry="3.4" fill="#e6e3dc"/><ellipse cx="190.8" cy="148.1" rx="2.4" ry="2.5" fill="#26201c"/><rect x="193.4" y="142.8" width="4.3" height="2.1" fill="#efece4"/><rect x="206.3" y="152.8" width="6.9" height="6.4" fill="#828a92"/><ellipse cx="209.7" cy="151.8" rx="3.6" ry="3.4" fill="#e0d9ca"/><ellipse cx="209.7" cy="147.5" rx="2.4" ry="2.5" fill="#2f2824"/><rect x="222.4" y="151.8" width="6.9" height="6.4" fill="#828a92"/><ellipse cx="225.8" cy="150.7" rx="3.6" ry="3.4" fill="#4a535e"/><ellipse cx="225.8" cy="146.4" rx="2.4" ry="2.5" fill="#26201c"/><rect x="228.4" y="151.3" width="6.9" height="6.4" fill="#596068"/><ellipse cx="231.8" cy="150.2" rx="3.6" ry="3.4" fill="#4a535e"/><ellipse cx="231.8" cy="145.9" rx="2.4" ry="2.5" fill="#2f2824"/><rect x="246" y="149.4" width="6.9" height="6.4" fill="#737b83"/><ellipse cx="249.5" cy="148.3" rx="3.6" ry="3.4" fill="#d2cec6"/><ellipse cx="249.5" cy="144" rx="2.4" ry="2.5" fill="#26201c"/><rect x="252" y="138.7" width="4.3" height="2.1" fill="#efece4"/><rect x="257.7" y="147.9" width="6.9" height="6.4" fill="#666e76"/><ellipse cx="261.1" cy="146.8" rx="3.6" ry="3.4" fill="#dcd8d0"/><ellipse cx="261.1" cy="142.5" rx="2.4" ry="2.5" fill="#26201c"/><rect x="274.6" y="145.2" width="6.9" height="6.4" fill="#828a92"/><ellipse cx="278" cy="144.1" rx="3.6" ry="3.4" fill="#2e3238"/><ellipse cx="278" cy="139.8" rx="2.4" ry="2.5" fill="#191412"/><rect x="290.3" y="142.3" width="6.9" height="6.4" fill="#596068"/><ellipse cx="293.8" cy="141.2" rx="3.6" ry="3.4" fill="#f2f0ea"/><ellipse cx="293.8" cy="136.9" rx="2.4" ry="2.5" fill="#26201c"/><rect x="296.2" y="141.1" width="6.9" height="6.4" fill="#828a92"/><ellipse cx="299.6" cy="140" rx="3.6" ry="3.4" fill="#e9e4d8"/><ellipse cx="299.6" cy="135.7" rx="2.4" ry="2.5" fill="#1d1815"/><rect x="302.2" y="130.4" width="4.3" height="2.1" fill="#efece4"/><rect x="311.3" y="137.7" width="6.9" height="6.4" fill="#737b83"/><ellipse cx="314.8" cy="136.6" rx="3.6" ry="3.4" fill="#f2f0ea"/><ellipse cx="314.8" cy="132.3" rx="2.4" ry="2.5" fill="#1d1815"/><rect x="317.3" y="127" width="4.3" height="2.1" fill="#efece4"/><rect x="331.1" y="132.7" width="6.9" height="6.4" fill="#737b83"/><ellipse cx="334.5" cy="131.6" rx="3.6" ry="3.4" fill="#d2cec6"/><ellipse cx="334.5" cy="127.3" rx="2.4" ry="2.5" fill="#191412"/><rect x="337.1" y="122" width="4.3" height="2.1" fill="#efece4"/><rect x="337.3" y="131" width="6.9" height="6.4" fill="#828a92"/><ellipse cx="340.7" cy="129.9" rx="3.6" ry="3.4" fill="#7f93aa"/><ellipse cx="340.7" cy="125.6" rx="2.4" ry="2.5" fill="#2f2824"/><rect x="356.3" y="125.3" width="6.9" height="6.4" fill="#666e76"/><ellipse cx="359.7" cy="124.2" rx="3.6" ry="3.4" fill="#9fb0c4"/><ellipse cx="359.7" cy="119.9" rx="2.4" ry="2.5" fill="#2f2824"/><rect x="362.3" y="114.6" width="4.3" height="2.1" fill="#efece4"/><rect x="3.1" y="131.3" width="7.6" height="7.1" fill="#444b52"/><ellipse cx="6.9" cy="130.1" rx="4" ry="3.8" fill="#e9e4d8"/><ellipse cx="6.9" cy="125.4" rx="2.6" ry="2.8" fill="#191412"/><rect x="9.7" y="119.4" width="4.8" height="2.4" fill="#efece4"/><rect x="19.2" y="137" width="7.6" height="7.1" fill="#6a727a"/><ellipse cx="23.1" cy="135.8" rx="4" ry="3.8" fill="#efece5"/><ellipse cx="23.1" cy="131.1" rx="2.6" ry="2.8" fill="#191412"/><rect x="34.5" y="141.9" width="7.6" height="7.1" fill="#6a727a"/><ellipse cx="38.3" cy="140.7" rx="4" ry="3.8" fill="#8a8a86"/><ellipse cx="38.3" cy="136" rx="2.6" ry="2.8" fill="#26201c"/><rect x="41.2" y="130" width="4.8" height="2.4" fill="#efece4"/><rect x="40.9" y="143.8" width="7.6" height="7.1" fill="#5c646c"/><ellipse cx="44.7" cy="142.6" rx="4" ry="3.8" fill="#c4bba8"/><ellipse cx="44.7" cy="137.9" rx="2.6" ry="2.8" fill="#191412"/><rect x="65.3" y="150.2" width="7.6" height="7.1" fill="#444b52"/><ellipse cx="69.1" cy="149" rx="4" ry="3.8" fill="#e9e4d8"/><ellipse cx="69.1" cy="144.3" rx="2.6" ry="2.8" fill="#1d1815"/><rect x="72" y="138.3" width="4.8" height="2.4" fill="#efece4"/><rect x="76.2" y="152.7" width="7.6" height="7.1" fill="#5c646c"/><ellipse cx="80" cy="151.5" rx="4" ry="3.8" fill="#e0d9ca"/><ellipse cx="80" cy="146.7" rx="2.6" ry="2.8" fill="#1d1815"/><rect x="82.9" y="140.8" width="4.8" height="2.4" fill="#efece4"/><rect x="93.2" y="156" width="7.6" height="7.1" fill="#6a727a"/><ellipse cx="97" cy="154.8" rx="4" ry="3.8" fill="#5a6470"/><ellipse cx="97" cy="150.1" rx="2.6" ry="2.8" fill="#1d1815"/><rect x="102.3" y="157.5" width="7.6" height="7.1" fill="#444b52"/><ellipse cx="106.1" cy="156.3" rx="4" ry="3.8" fill="#7f93aa"/><ellipse cx="106.1" cy="151.6" rx="2.6" ry="2.8" fill="#26201c"/><rect x="119.9" y="160" width="7.6" height="7.1" fill="#444b52"/><ellipse cx="123.7" cy="158.8" rx="4" ry="3.8" fill="#dcd8d0"/><ellipse cx="123.7" cy="154.1" rx="2.6" ry="2.8" fill="#1d1815"/><rect x="126.6" y="148.1" width="4.8" height="2.4" fill="#efece4"/><rect x="133.3" y="161.4" width="7.6" height="7.1" fill="#6a727a"/><ellipse cx="137.1" cy="160.2" rx="4" ry="3.8" fill="#2e3238"/><ellipse cx="137.1" cy="155.5" rx="2.6" ry="2.8" fill="#26201c"/><rect x="139.9" y="149.5" width="4.8" height="2.4" fill="#efece4"/><rect x="155.3" y="162.9" width="7.6" height="7.1" fill="#444b52"/><ellipse cx="159.1" cy="161.8" rx="4" ry="3.8" fill="#f2f0ea"/><ellipse cx="159.1" cy="157" rx="2.6" ry="2.8" fill="#26201c"/><rect x="174.1" y="163.4" width="7.6" height="7.1" fill="#6a727a"/><ellipse cx="178" cy="162.2" rx="4" ry="3.8" fill="#f2f0ea"/><ellipse cx="178" cy="157.5" rx="2.6" ry="2.8" fill="#2f2824"/><rect x="180.9" y="163.4" width="7.6" height="7.1" fill="#5c646c"/><ellipse cx="184.7" cy="162.2" rx="4" ry="3.8" fill="#9fb0c4"/><ellipse cx="184.7" cy="157.5" rx="2.6" ry="2.8" fill="#26201c"/><rect x="194.7" y="163.1" width="7.6" height="7.1" fill="#444b52"/><ellipse cx="198.5" cy="161.9" rx="4" ry="3.8" fill="#c4bba8"/><ellipse cx="198.5" cy="157.1" rx="2.6" ry="2.8" fill="#191412"/><rect x="216.9" y="161.7" width="7.6" height="7.1" fill="#6a727a"/><ellipse cx="220.7" cy="160.5" rx="4" ry="3.8" fill="#5a6470"/><ellipse cx="220.7" cy="155.8" rx="2.6" ry="2.8" fill="#1d1815"/><rect x="234.8" y="159.8" width="7.6" height="7.1" fill="#4e565e"/><ellipse cx="238.6" cy="158.6" rx="4" ry="3.8" fill="#5a6470"/><ellipse cx="238.6" cy="153.9" rx="2.6" ry="2.8" fill="#2f2824"/><rect x="248.1" y="158" width="7.6" height="7.1" fill="#5c646c"/><ellipse cx="251.9" cy="156.8" rx="4" ry="3.8" fill="#8a8a86"/><ellipse cx="251.9" cy="152.1" rx="2.6" ry="2.8" fill="#191412"/><rect x="266.5" y="154.8" width="7.6" height="7.1" fill="#444b52"/><ellipse cx="270.3" cy="153.6" rx="4" ry="3.8" fill="#e0d9ca"/><ellipse cx="270.3" cy="148.9" rx="2.6" ry="2.8" fill="#26201c"/><rect x="272.2" y="153.7" width="7.6" height="7.1" fill="#4e565e"/><ellipse cx="276" cy="152.5" rx="4" ry="3.8" fill="#e0d9ca"/><ellipse cx="276" cy="147.8" rx="2.6" ry="2.8" fill="#26201c"/><rect x="295.6" y="148.4" width="7.6" height="7.1" fill="#6a727a"/><ellipse cx="299.4" cy="147.2" rx="4" ry="3.8" fill="#dcd8d0"/><ellipse cx="299.4" cy="142.4" rx="2.6" ry="2.8" fill="#191412"/><rect x="310.2" y="144.5" width="7.6" height="7.1" fill="#6a727a"/><ellipse cx="314" cy="143.3" rx="4" ry="3.8" fill="#3e4650"/><ellipse cx="314" cy="138.5" rx="2.6" ry="2.8" fill="#1d1815"/><rect x="316.8" y="132.6" width="4.8" height="2.4" fill="#efece4"/><rect x="318.7" y="142" width="7.6" height="7.1" fill="#5c646c"/><ellipse cx="322.5" cy="140.8" rx="4" ry="3.8" fill="#3e4650"/><ellipse cx="322.5" cy="136" rx="2.6" ry="2.8" fill="#191412"/><rect x="325.4" y="130.1" width="4.8" height="2.4" fill="#efece4"/><rect x="336.6" y="136.2" width="7.6" height="7.1" fill="#5c646c"/><ellipse cx="340.4" cy="135" rx="4" ry="3.8" fill="#e0d9ca"/><ellipse cx="340.4" cy="130.3" rx="2.6" ry="2.8" fill="#1d1815"/><rect x="343.3" y="124.3" width="4.8" height="2.4" fill="#efece4"/><rect x="356.7" y="128.9" width="7.6" height="7.1" fill="#4e565e"/><ellipse cx="360.5" cy="127.7" rx="4" ry="3.8" fill="#a39e96"/><ellipse cx="360.5" cy="123" rx="2.6" ry="2.8" fill="#2f2824"/><rect x="-2.3" y="134.1" width="8.4" height="7.8" fill="#6a727a"/><ellipse cx="1.8" cy="132.7" rx="4.4" ry="4.2" fill="#8a8a86"/><ellipse cx="1.8" cy="127.5" rx="2.9" ry="3" fill="#1d1815"/><rect x="5" y="121" width="5.2" height="2.6" fill="#efece4"/><rect x="14.4" y="141.2" width="8.4" height="7.8" fill="#444b52"/><ellipse cx="18.6" cy="139.9" rx="4.4" ry="4.2" fill="#8a8a86"/><ellipse cx="18.6" cy="134.7" rx="2.9" ry="3" fill="#26201c"/><rect x="36.4" y="149.5" width="8.4" height="7.8" fill="#444b52"/><ellipse cx="40.6" cy="148.2" rx="4.4" ry="4.2" fill="#d2cec6"/><ellipse cx="40.6" cy="142.9" rx="2.9" ry="3" fill="#1d1815"/><rect x="52" y="154.6" width="8.4" height="7.8" fill="#444b52"/><ellipse cx="56.2" cy="153.3" rx="4.4" ry="4.2" fill="#dcd8d0"/><ellipse cx="56.2" cy="148.1" rx="2.9" ry="3" fill="#2f2824"/><rect x="67" y="159" width="8.4" height="7.8" fill="#4e565e"/><ellipse cx="71.2" cy="157.7" rx="4.4" ry="4.2" fill="#7f93aa"/><ellipse cx="71.2" cy="152.5" rx="2.9" ry="3" fill="#26201c"/><rect x="80.9" y="162.5" width="8.4" height="7.8" fill="#5c646c"/><ellipse cx="85.1" cy="161.2" rx="4.4" ry="4.2" fill="#c4bba8"/><ellipse cx="85.1" cy="156" rx="2.9" ry="3" fill="#2f2824"/><rect x="99.9" y="166.6" width="8.4" height="7.8" fill="#4e565e"/><ellipse cx="104.1" cy="165.3" rx="4.4" ry="4.2" fill="#4a535e"/><ellipse cx="104.1" cy="160.1" rx="2.9" ry="3" fill="#191412"/><rect x="121.9" y="170.2" width="8.4" height="7.8" fill="#6a727a"/><ellipse cx="126.1" cy="168.9" rx="4.4" ry="4.2" fill="#4a535e"/><ellipse cx="126.1" cy="163.7" rx="2.9" ry="3" fill="#1d1815"/><rect x="135.5" y="171.8" width="8.4" height="7.8" fill="#4e565e"/><ellipse cx="139.7" cy="170.5" rx="4.4" ry="4.2" fill="#e9e4d8"/><ellipse cx="139.7" cy="165.3" rx="2.9" ry="3" fill="#191412"/><rect x="142.8" y="158.8" width="5.2" height="2.6" fill="#efece4"/><rect x="152.8" y="173.2" width="8.4" height="7.8" fill="#5c646c"/><ellipse cx="157" cy="171.9" rx="4.4" ry="4.2" fill="#e9e4d8"/><ellipse cx="157" cy="166.7" rx="2.9" ry="3" fill="#1d1815"/><rect x="163.5" y="173.7" width="8.4" height="7.8" fill="#5c646c"/><ellipse cx="167.7" cy="172.4" rx="4.4" ry="4.2" fill="#2e3238"/><ellipse cx="167.7" cy="167.2" rx="2.9" ry="3" fill="#191412"/><rect x="170.8" y="160.7" width="5.2" height="2.6" fill="#efece4"/><rect x="187.6" y="173.8" width="8.4" height="7.8" fill="#4e565e"/><ellipse cx="191.8" cy="172.5" rx="4.4" ry="4.2" fill="#d2cec6"/><ellipse cx="191.8" cy="167.2" rx="2.9" ry="3" fill="#26201c"/><rect x="201.5" y="173.1" width="8.4" height="7.8" fill="#6a727a"/><ellipse cx="205.6" cy="171.8" rx="4.4" ry="4.2" fill="#c4bba8"/><ellipse cx="205.6" cy="166.6" rx="2.9" ry="3" fill="#1d1815"/><rect x="208.8" y="160.1" width="5.2" height="2.6" fill="#efece4"/><rect x="215.2" y="172" width="8.4" height="7.8" fill="#444b52"/><ellipse cx="219.4" cy="170.7" rx="4.4" ry="4.2" fill="#dcd8d0"/><ellipse cx="219.4" cy="165.5" rx="2.9" ry="3" fill="#191412"/><rect x="231.7" y="170.1" width="8.4" height="7.8" fill="#444b52"/><ellipse cx="235.9" cy="168.8" rx="4.4" ry="4.2" fill="#4a535e"/><ellipse cx="235.9" cy="163.6" rx="2.9" ry="3" fill="#2f2824"/><rect x="239" y="157" width="5.2" height="2.6" fill="#efece4"/><rect x="254.1" y="166.4" width="8.4" height="7.8" fill="#4e565e"/><ellipse cx="258.3" cy="165.1" rx="4.4" ry="4.2" fill="#8a8a86"/><ellipse cx="258.3" cy="159.8" rx="2.9" ry="3" fill="#2f2824"/><rect x="268" y="163.4" width="8.4" height="7.8" fill="#444b52"/><ellipse cx="272.2" cy="162.1" rx="4.4" ry="4.2" fill="#4a535e"/><ellipse cx="272.2" cy="156.9" rx="2.9" ry="3" fill="#191412"/><rect x="286.5" y="158.8" width="8.4" height="7.8" fill="#5c646c"/><ellipse cx="290.7" cy="157.4" rx="4.4" ry="4.2" fill="#dcd8d0"/><ellipse cx="290.7" cy="152.2" rx="2.9" ry="3" fill="#191412"/><rect x="300.4" y="154.7" width="8.4" height="7.8" fill="#4e565e"/><ellipse cx="304.6" cy="153.4" rx="4.4" ry="4.2" fill="#e0d9ca"/><ellipse cx="304.6" cy="148.2" rx="2.9" ry="3" fill="#191412"/><rect x="316.4" y="149.4" width="8.4" height="7.8" fill="#444b52"/><ellipse cx="320.6" cy="148.1" rx="4.4" ry="4.2" fill="#dcd8d0"/><ellipse cx="320.6" cy="142.9" rx="2.9" ry="3" fill="#2f2824"/><rect x="323.7" y="136.3" width="5.2" height="2.6" fill="#efece4"/><rect x="335.5" y="142.3" width="8.4" height="7.8" fill="#444b52"/><ellipse cx="339.7" cy="141" rx="4.4" ry="4.2" fill="#9fb0c4"/><ellipse cx="339.7" cy="135.7" rx="2.9" ry="3" fill="#1d1815"/><rect x="342.8" y="129.2" width="5.2" height="2.6" fill="#efece4"/><rect x="352.2" y="135.3" width="8.4" height="7.8" fill="#5c646c"/><ellipse cx="356.4" cy="134" rx="4.4" ry="4.2" fill="#f2f0ea"/><ellipse cx="356.4" cy="128.8" rx="2.9" ry="3" fill="#191412"/><rect x="-6.1" y="137.5" width="9.1" height="8.5" fill="#6a727a"/><ellipse cx="-1.5" cy="136.1" rx="4.8" ry="4.6" fill="#8a8a86"/><ellipse cx="-1.5" cy="130.4" rx="3.1" ry="3.3" fill="#1d1815"/><rect x="19.3" y="149.8" width="9.1" height="8.5" fill="#5c646c"/><ellipse cx="23.8" cy="148.4" rx="4.8" ry="4.6" fill="#8a8a86"/><ellipse cx="23.8" cy="142.7" rx="3.1" ry="3.3" fill="#26201c"/><rect x="27.3" y="135.6" width="5.7" height="2.8" fill="#efece4"/><rect x="40.5" y="158.7" width="9.1" height="8.5" fill="#6a727a"/><ellipse cx="45" cy="157.3" rx="4.8" ry="4.6" fill="#7f93aa"/><ellipse cx="45" cy="151.6" rx="3.1" ry="3.3" fill="#2f2824"/><rect x="55.3" y="164.2" width="9.1" height="8.5" fill="#6a727a"/><ellipse cx="59.9" cy="162.7" rx="4.8" ry="4.6" fill="#2e3238"/><ellipse cx="59.9" cy="157" rx="3.1" ry="3.3" fill="#191412"/><rect x="80" y="171.8" width="9.1" height="8.5" fill="#444b52"/><ellipse cx="84.5" cy="170.4" rx="4.8" ry="4.6" fill="#d2cec6"/><ellipse cx="84.5" cy="164.7" rx="3.1" ry="3.3" fill="#1d1815"/><rect x="93.2" y="175.2" width="9.1" height="8.5" fill="#6a727a"/><ellipse cx="97.8" cy="173.8" rx="4.8" ry="4.6" fill="#7f93aa"/><ellipse cx="97.8" cy="168.1" rx="3.1" ry="3.3" fill="#2f2824"/><rect x="105.2" y="177.8" width="9.1" height="8.5" fill="#4e565e"/><ellipse cx="109.8" cy="176.4" rx="4.8" ry="4.6" fill="#5a6470"/><ellipse cx="109.8" cy="170.7" rx="3.1" ry="3.3" fill="#2f2824"/><rect x="113.2" y="163.6" width="5.7" height="2.8" fill="#efece4"/><rect x="126.6" y="181.5" width="9.1" height="8.5" fill="#444b52"/><ellipse cx="131.2" cy="180.1" rx="4.8" ry="4.6" fill="#7f93aa"/><ellipse cx="131.2" cy="174.4" rx="3.1" ry="3.3" fill="#2f2824"/><rect x="143.6" y="183.5" width="9.1" height="8.5" fill="#4e565e"/><ellipse cx="148.1" cy="182.1" rx="4.8" ry="4.6" fill="#a39e96"/><ellipse cx="148.1" cy="176.4" rx="3.1" ry="3.3" fill="#26201c"/><rect x="151.5" y="169.3" width="5.7" height="2.8" fill="#efece4"/><rect x="172" y="185" width="9.1" height="8.5" fill="#6a727a"/><ellipse cx="176.6" cy="183.6" rx="4.8" ry="4.6" fill="#e6e3dc"/><ellipse cx="176.6" cy="177.9" rx="3.1" ry="3.3" fill="#26201c"/><rect x="180" y="170.8" width="5.7" height="2.8" fill="#efece4"/><rect x="179.5" y="185" width="9.1" height="8.5" fill="#4e565e"/><ellipse cx="184" cy="183.6" rx="4.8" ry="4.6" fill="#9fb0c4"/><ellipse cx="184" cy="177.9" rx="3.1" ry="3.3" fill="#2f2824"/><rect x="202" y="184" width="9.1" height="8.5" fill="#6a727a"/><ellipse cx="206.5" cy="182.6" rx="4.8" ry="4.6" fill="#a39e96"/><ellipse cx="206.5" cy="176.9" rx="3.1" ry="3.3" fill="#191412"/><rect x="210" y="169.8" width="5.7" height="2.8" fill="#efece4"/><rect x="227.7" y="181.2" width="9.1" height="8.5" fill="#4e565e"/><ellipse cx="232.3" cy="179.7" rx="4.8" ry="4.6" fill="#9fb0c4"/><ellipse cx="232.3" cy="174.1" rx="3.1" ry="3.3" fill="#2f2824"/><rect x="242.2" y="178.7" width="9.1" height="8.5" fill="#444b52"/><ellipse cx="246.7" cy="177.3" rx="4.8" ry="4.6" fill="#6a7480"/><ellipse cx="246.7" cy="171.6" rx="3.1" ry="3.3" fill="#191412"/><rect x="250.2" y="164.5" width="5.7" height="2.8" fill="#efece4"/><rect x="255.3" y="176" width="9.1" height="8.5" fill="#6a727a"/><ellipse cx="259.8" cy="174.6" rx="4.8" ry="4.6" fill="#efece5"/><ellipse cx="259.8" cy="168.9" rx="3.1" ry="3.3" fill="#191412"/><rect x="276" y="170.7" width="9.1" height="8.5" fill="#444b52"/><ellipse cx="280.6" cy="169.2" rx="4.8" ry="4.6" fill="#c4bba8"/><ellipse cx="280.6" cy="163.5" rx="3.1" ry="3.3" fill="#26201c"/><rect x="284" y="156.4" width="5.7" height="2.8" fill="#efece4"/><rect x="293" y="165.4" width="9.1" height="8.5" fill="#5c646c"/><ellipse cx="297.6" cy="164" rx="4.8" ry="4.6" fill="#e6e3dc"/><ellipse cx="297.6" cy="158.3" rx="3.1" ry="3.3" fill="#1d1815"/><rect x="301" y="151.1" width="5.7" height="2.8" fill="#efece4"/><rect x="309.2" y="159.6" width="9.1" height="8.5" fill="#5c646c"/><ellipse cx="313.7" cy="158.2" rx="4.8" ry="4.6" fill="#2e3238"/><ellipse cx="313.7" cy="152.5" rx="3.1" ry="3.3" fill="#191412"/><rect x="332.6" y="149.9" width="9.1" height="8.5" fill="#5c646c"/><ellipse cx="337.1" cy="148.4" rx="4.8" ry="4.6" fill="#efece5"/><ellipse cx="337.1" cy="142.7" rx="3.1" ry="3.3" fill="#2f2824"/><rect x="354.7" y="139.2" width="9.1" height="8.5" fill="#4e565e"/><ellipse cx="359.3" cy="137.8" rx="4.8" ry="4.6" fill="#2e3238"/><ellipse cx="359.3" cy="132.1" rx="3.1" ry="3.3" fill="#2f2824"/><rect x="-1.2" y="146.1" width="9.9" height="9.2" fill="#6a727a"/><ellipse cx="3.7" cy="144.6" rx="5.2" ry="4.9" fill="#a39e96"/><ellipse cx="3.7" cy="138.4" rx="3.4" ry="3.6" fill="#2f2824"/><rect x="7.4" y="130.7" width="6.2" height="3.1" fill="#efece4"/><rect x="15.4" y="155.2" width="9.9" height="9.2" fill="#4e565e"/><ellipse cx="20.3" cy="153.6" rx="5.2" ry="4.9" fill="#5a6470"/><ellipse cx="20.3" cy="147.5" rx="3.4" ry="3.6" fill="#2f2824"/><rect x="24" y="139.8" width="6.2" height="3.1" fill="#efece4"/><rect x="49.9" y="171.1" width="9.9" height="9.2" fill="#444b52"/><ellipse cx="54.8" cy="169.6" rx="5.2" ry="4.9" fill="#a39e96"/><ellipse cx="54.8" cy="163.4" rx="3.4" ry="3.6" fill="#2f2824"/><rect x="66.5" y="177.4" width="9.9" height="9.2" fill="#6a727a"/><ellipse cx="71.4" cy="175.8" rx="5.2" ry="4.9" fill="#8a8a86"/><ellipse cx="71.4" cy="169.7" rx="3.4" ry="3.6" fill="#2f2824"/><rect x="88.7" y="184.4" width="9.9" height="9.2" fill="#5c646c"/><ellipse cx="93.6" cy="182.9" rx="5.2" ry="4.9" fill="#a39e96"/><ellipse cx="93.6" cy="176.7" rx="3.4" ry="3.6" fill="#2f2824"/><rect x="97.3" y="169.1" width="6.2" height="3.1" fill="#efece4"/><rect x="108.4" y="189.4" width="9.9" height="9.2" fill="#6a727a"/><ellipse cx="113.4" cy="187.8" rx="5.2" ry="4.9" fill="#e6e3dc"/><ellipse cx="113.4" cy="181.7" rx="3.4" ry="3.6" fill="#191412"/><rect x="129.9" y="193.3" width="9.9" height="9.2" fill="#6a727a"/><ellipse cx="134.8" cy="191.7" rx="5.2" ry="4.9" fill="#dcd8d0"/><ellipse cx="134.8" cy="185.6" rx="3.4" ry="3.6" fill="#191412"/><rect x="153.1" y="195.8" width="9.9" height="9.2" fill="#5c646c"/><ellipse cx="158" cy="194.3" rx="5.2" ry="4.9" fill="#a39e96"/><ellipse cx="158" cy="188.1" rx="3.4" ry="3.6" fill="#26201c"/><rect x="161.7" y="180.4" width="6.2" height="3.1" fill="#efece4"/><rect x="176.1" y="196.6" width="9.9" height="9.2" fill="#5c646c"/><ellipse cx="181" cy="195.1" rx="5.2" ry="4.9" fill="#8a8a86"/><ellipse cx="181" cy="188.9" rx="3.4" ry="3.6" fill="#2f2824"/><rect x="197.7" y="195.9" width="9.9" height="9.2" fill="#5c646c"/><ellipse cx="202.6" cy="194.3" rx="5.2" ry="4.9" fill="#d2cec6"/><ellipse cx="202.6" cy="188.2" rx="3.4" ry="3.6" fill="#1d1815"/><rect x="223.8" y="192.9" width="9.9" height="9.2" fill="#444b52"/><ellipse cx="228.7" cy="191.3" rx="5.2" ry="4.9" fill="#d2cec6"/><ellipse cx="228.7" cy="185.2" rx="3.4" ry="3.6" fill="#191412"/><rect x="241.8" y="189.6" width="9.9" height="9.2" fill="#444b52"/><ellipse cx="246.7" cy="188" rx="5.2" ry="4.9" fill="#5a6470"/><ellipse cx="246.7" cy="181.9" rx="3.4" ry="3.6" fill="#1d1815"/><rect x="258.9" y="185.4" width="9.9" height="9.2" fill="#5c646c"/><ellipse cx="263.9" cy="183.9" rx="5.2" ry="4.9" fill="#2e3238"/><ellipse cx="263.9" cy="177.7" rx="3.4" ry="3.6" fill="#2f2824"/><rect x="267.6" y="170" width="6.2" height="3.1" fill="#efece4"/><rect x="288.1" y="176.2" width="9.9" height="9.2" fill="#6a727a"/><ellipse cx="293" cy="174.6" rx="5.2" ry="4.9" fill="#d2cec6"/><ellipse cx="293" cy="168.5" rx="3.4" ry="3.6" fill="#26201c"/><rect x="296.7" y="160.8" width="6.2" height="3.1" fill="#efece4"/><rect x="313.5" y="165.9" width="9.9" height="9.2" fill="#6a727a"/><ellipse cx="318.4" cy="164.3" rx="5.2" ry="4.9" fill="#4a535e"/><ellipse cx="318.4" cy="158.2" rx="3.4" ry="3.6" fill="#26201c"/><rect x="322.1" y="150.5" width="6.2" height="3.1" fill="#efece4"/><rect x="332.9" y="156.6" width="9.9" height="9.2" fill="#6a727a"/><ellipse cx="337.8" cy="155.1" rx="5.2" ry="4.9" fill="#5a6470"/><ellipse cx="337.8" cy="148.9" rx="3.4" ry="3.6" fill="#1d1815"/><rect x="341.5" y="141.2" width="6.2" height="3.1" fill="#efece4"/><rect x="354.7" y="144.7" width="9.9" height="9.2" fill="#4e565e"/><ellipse cx="359.6" cy="143.2" rx="5.2" ry="4.9" fill="#a39e96"/><ellipse cx="359.6" cy="137" rx="3.4" ry="3.6" fill="#1d1815"/><rect x="4.6" y="156.3" width="10.6" height="9.9" fill="#6a727a"/><ellipse cx="9.9" cy="154.7" rx="5.6" ry="5.3" fill="#9fb0c4"/><ellipse cx="9.9" cy="148.1" rx="3.6" ry="3.8" fill="#26201c"/><rect x="28.8" y="170.2" width="10.6" height="9.9" fill="#444b52"/><ellipse cx="34.1" cy="168.5" rx="5.6" ry="5.3" fill="#e6e3dc"/><ellipse cx="34.1" cy="161.9" rx="3.6" ry="3.8" fill="#2f2824"/><rect x="54.2" y="182.4" width="10.6" height="9.9" fill="#444b52"/><ellipse cx="59.5" cy="180.8" rx="5.6" ry="5.3" fill="#5a6470"/><ellipse cx="59.5" cy="174.2" rx="3.6" ry="3.8" fill="#191412"/><rect x="68.2" y="188.2" width="10.6" height="9.9" fill="#5c646c"/><ellipse cx="73.5" cy="186.5" rx="5.6" ry="5.3" fill="#3e4650"/><ellipse cx="73.5" cy="179.9" rx="3.6" ry="3.8" fill="#26201c"/><rect x="77.5" y="171.6" width="6.6" height="3.3" fill="#efece4"/><rect x="95.6" y="197.4" width="10.6" height="9.9" fill="#444b52"/><ellipse cx="100.9" cy="195.7" rx="5.6" ry="5.3" fill="#3e4650"/><ellipse cx="100.9" cy="189.1" rx="3.6" ry="3.8" fill="#1d1815"/><rect x="122.6" y="203.8" width="10.6" height="9.9" fill="#444b52"/><ellipse cx="127.9" cy="202.2" rx="5.6" ry="5.3" fill="#8a8a86"/><ellipse cx="127.9" cy="195.5" rx="3.6" ry="3.8" fill="#191412"/><rect x="131.9" y="187.2" width="6.6" height="3.3" fill="#efece4"/><rect x="146.2" y="207.3" width="10.6" height="9.9" fill="#6a727a"/><ellipse cx="151.5" cy="205.6" rx="5.6" ry="5.3" fill="#6a7480"/><ellipse cx="151.5" cy="199" rx="3.6" ry="3.8" fill="#2f2824"/><rect x="182.9" y="208.7" width="10.6" height="9.9" fill="#5c646c"/><ellipse cx="188.2" cy="207" rx="5.6" ry="5.3" fill="#5a6470"/><ellipse cx="188.2" cy="200.4" rx="3.6" ry="3.8" fill="#26201c"/><rect x="204.5" y="207.2" width="10.6" height="9.9" fill="#4e565e"/><ellipse cx="209.8" cy="205.6" rx="5.6" ry="5.3" fill="#a39e96"/><ellipse cx="209.8" cy="199" rx="3.6" ry="3.8" fill="#191412"/><rect x="216.8" y="205.7" width="10.6" height="9.9" fill="#4e565e"/><ellipse cx="222.1" cy="204" rx="5.6" ry="5.3" fill="#7f93aa"/><ellipse cx="222.1" cy="197.4" rx="3.6" ry="3.8" fill="#26201c"/><rect x="244.6" y="200.1" width="10.6" height="9.9" fill="#6a727a"/><ellipse cx="249.9" cy="198.4" rx="5.6" ry="5.3" fill="#8a8a86"/><ellipse cx="249.9" cy="191.8" rx="3.6" ry="3.8" fill="#26201c"/><rect x="266.4" y="193.8" width="10.6" height="9.9" fill="#4e565e"/><ellipse cx="271.7" cy="192.2" rx="5.6" ry="5.3" fill="#efece5"/><ellipse cx="271.7" cy="185.5" rx="3.6" ry="3.8" fill="#2f2824"/><rect x="305.7" y="178.1" width="10.6" height="9.9" fill="#5c646c"/><ellipse cx="311" cy="176.4" rx="5.6" ry="5.3" fill="#8a8a86"/><ellipse cx="311" cy="169.8" rx="3.6" ry="3.8" fill="#26201c"/><rect x="317.3" y="172.4" width="10.6" height="9.9" fill="#4e565e"/><ellipse cx="322.6" cy="170.7" rx="5.6" ry="5.3" fill="#7f93aa"/><ellipse cx="322.6" cy="164.1" rx="3.6" ry="3.8" fill="#1d1815"/><rect x="326.6" y="155.8" width="6.6" height="3.3" fill="#efece4"/><rect x="343" y="158.1" width="10.6" height="9.9" fill="#4e565e"/><ellipse cx="348.3" cy="156.4" rx="5.6" ry="5.3" fill="#a39e96"/><ellipse cx="348.3" cy="149.8" rx="3.6" ry="3.8" fill="#1d1815"/><rect x="352.3" y="141.5" width="6.6" height="3.3" fill="#efece4"/><rect x="10.1" y="167.6" width="11.3" height="10.6" fill="#444b52"/><ellipse cx="15.8" cy="165.8" rx="6" ry="5.7" fill="#e9e4d8"/><ellipse cx="15.8" cy="158.7" rx="3.9" ry="4.1" fill="#26201c"/><rect x="32.3" y="181.1" width="11.3" height="10.6" fill="#5c646c"/><ellipse cx="38" cy="179.3" rx="6" ry="5.7" fill="#2e3238"/><ellipse cx="38" cy="172.2" rx="3.9" ry="4.1" fill="#2f2824"/><rect x="51.2" y="191.1" width="11.3" height="10.6" fill="#444b52"/><ellipse cx="56.9" cy="189.3" rx="6" ry="5.7" fill="#e6e3dc"/><ellipse cx="56.9" cy="182.2" rx="3.9" ry="4.1" fill="#191412"/><rect x="61.2" y="173.4" width="7.1" height="3.5" fill="#efece4"/><rect x="84.9" y="205.4" width="11.3" height="10.6" fill="#6a727a"/><ellipse cx="90.6" cy="203.6" rx="6" ry="5.7" fill="#5a6470"/><ellipse cx="90.6" cy="196.5" rx="3.9" ry="4.1" fill="#191412"/><rect x="109.9" y="213.1" width="11.3" height="10.6" fill="#6a727a"/><ellipse cx="115.6" cy="211.3" rx="6" ry="5.7" fill="#3e4650"/><ellipse cx="115.6" cy="204.2" rx="3.9" ry="4.1" fill="#2f2824"/><rect x="119.8" y="195.3" width="7.1" height="3.5" fill="#efece4"/><rect x="151.3" y="220.3" width="11.3" height="10.6" fill="#6a727a"/><ellipse cx="157" cy="218.5" rx="6" ry="5.7" fill="#efece5"/><ellipse cx="157" cy="211.5" rx="3.9" ry="4.1" fill="#191412"/><rect x="167.1" y="221.3" width="11.3" height="10.6" fill="#6a727a"/><ellipse cx="172.8" cy="219.5" rx="6" ry="5.7" fill="#e9e4d8"/><ellipse cx="172.8" cy="212.4" rx="3.9" ry="4.1" fill="#2f2824"/><rect x="210.1" y="218.9" width="11.3" height="10.6" fill="#444b52"/><ellipse cx="215.8" cy="217.2" rx="6" ry="5.7" fill="#5a6470"/><ellipse cx="215.8" cy="210.1" rx="3.9" ry="4.1" fill="#2f2824"/><rect x="223.7" y="216.7" width="11.3" height="10.6" fill="#6a727a"/><ellipse cx="229.4" cy="214.9" rx="6" ry="5.7" fill="#e6e3dc"/><ellipse cx="229.4" cy="207.8" rx="3.9" ry="4.1" fill="#191412"/><rect x="233.6" y="199" width="7.1" height="3.5" fill="#efece4"/><rect x="269.5" y="203.6" width="11.3" height="10.6" fill="#5c646c"/><ellipse cx="275.2" cy="201.8" rx="6" ry="5.7" fill="#3e4650"/><ellipse cx="275.2" cy="194.7" rx="3.9" ry="4.1" fill="#191412"/><rect x="279.5" y="185.9" width="7.1" height="3.5" fill="#efece4"/><rect x="286.3" y="196.7" width="11.3" height="10.6" fill="#4e565e"/><ellipse cx="292" cy="195" rx="6" ry="5.7" fill="#a39e96"/><ellipse cx="292" cy="187.9" rx="3.9" ry="4.1" fill="#2f2824"/><rect x="319.7" y="179.8" width="11.3" height="10.6" fill="#5c646c"/><ellipse cx="325.3" cy="178" rx="6" ry="5.7" fill="#d2cec6"/><ellipse cx="325.3" cy="170.9" rx="3.9" ry="4.1" fill="#1d1815"/><rect x="348.9" y="161.3" width="11.3" height="10.6" fill="#444b52"/><ellipse cx="354.6" cy="159.5" rx="6" ry="5.7" fill="#7f93aa"/><ellipse cx="354.6" cy="152.4" rx="3.9" ry="4.1" fill="#1d1815"/></g>
<rect x="0" y="100" width="6" height="118" fill="#1a120e" opacity="0.500"/>
</g></svg>
<svg style="left:340px;top:130px" width="500" height="592" viewBox="340 130 500 592">
<g fill="none" stroke="#999" stroke-width="0.800">
<path d="M366 720.500h13.500v1.500M816 720.500h-13.500v1.500" stroke="#858585" stroke-width="1.100"/>
<path d="M593.500 154v4h-3.500M591.200 156.500l-1.500 1.500 1.500 1.500"/>
<path d="M646.500 199v4h-3.500M644.200 201.500l-1.500 1.500 1.500 1.500"/>
<path d="M381.500 135.500v3h-1.500"/><path d="M401.500 616.500v3h-1.500"/><path d="M634.500 667v3h-1.500"/><path d="M731.500 595v3h-1.500"/><path d="M780.500 574v3h-1"/><path d="M780.500 343v3h-1"/>
</g>
</svg>
</div>
</body>
</html>
